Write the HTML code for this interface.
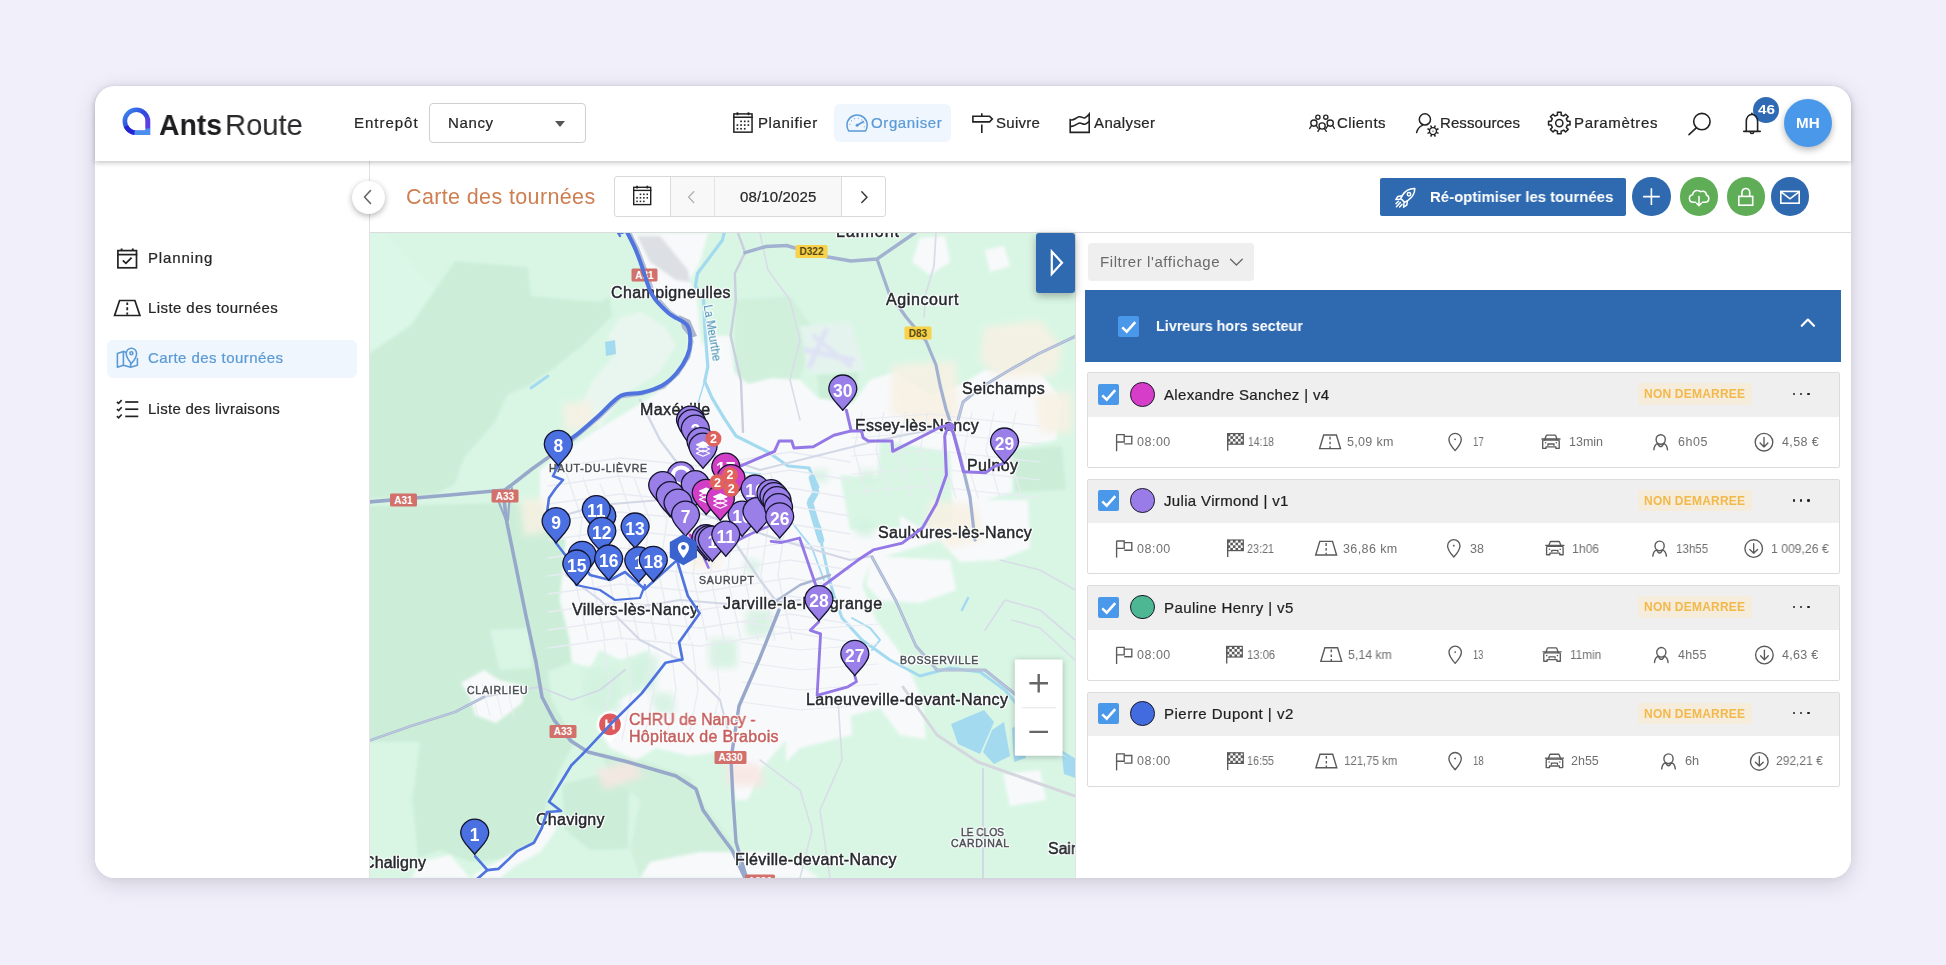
<!DOCTYPE html>
<html lang="fr">
<head>
<meta charset="utf-8">
<title>AntsRoute - Carte des tournées</title>
<style>
*{box-sizing:border-box;margin:0;padding:0}
html,body{width:1946px;height:965px;overflow:hidden}
body{background:#f1effa;font-family:"Liberation Sans",sans-serif;position:relative}
.abs{position:absolute}
.t{position:absolute;white-space:pre;font-family:"Liberation Sans",sans-serif;will-change:transform}
#card{position:absolute;left:95px;top:86px;width:1756px;height:792px;border-radius:20px;background:#fff;
  box-shadow:0 6px 22px rgba(60,60,80,.17),0 0 10px rgba(60,60,80,.08)}
#clip{position:absolute;left:95px;top:86px;width:1756px;height:792px;border-radius:20px;overflow:hidden}
#clip>.in{position:absolute;left:-95px;top:-86px;width:1946px;height:965px}
#hdr{position:absolute;left:95px;top:86px;width:1756px;height:75px;background:#fff;
  box-shadow:0 2px 5px rgba(0,0,0,.22);z-index:5}
svg{position:absolute;overflow:visible}
.ic{fill:none;stroke:#222;stroke-width:1.6;stroke-linecap:round;stroke-linejoin:round}
</style>
</head>
<body>
<div id="card"></div>
<div id="clip"><div class="in">

<!-- ================= MAP ================= -->
<svg style="left:370px;top:233px" width="705" height="645" viewBox="370 233 705 645">
<defs><clipPath id="mc"><rect x="370" y="233" width="705" height="645"/></clipPath><filter id="soft" x="-5%" y="-5%" width="110%" height="110%"><feGaussianBlur stdDeviation="1.4"/></filter><filter id="soft3" x="-5%" y="-5%" width="110%" height="110%"><feGaussianBlur stdDeviation="3.5"/></filter></defs>
<g clip-path="url(#mc)">
<rect x="370" y="233" width="705" height="645" fill="#d9f6e5"/>
<g filter="url(#soft)">
<path d="M368 354 L411 325 L435 290 L455 261 L528 267 L531 296 L600 302 L610 296 L612 316 L583 345 L554 368 L528 386 L507 395 L496 421 L464 458 L455 484 L435 495 L368 499 Z" fill="#cceed8" />
<path d="M368 233 L383 233 L435 290 L411 325 L368 354 Z" fill="#daf7e8" />
<path d="M368 506 L500 503 L560 506 L566 540 L560 600 L570 640 L572 662 L548 672 L552 700 L575 742 L560 770 L548 800 L536 842 L520 858 L470 862 L440 850 L418 858 L412 800 L420 742 L368 742 Z" fill="#cceed8" />
<path d="M490 630 L528 628 L532 668 L500 670 Z" fill="#d9f6e5" />
<path d="M562 784 L600 775 L629 790 L628 849 L590 850 L565 830 Z" fill="#cceed8" />
<path d="M600 752 L640 760 L690 776 L700 800 L732 842 L745 878 L640 878 L630 850 L640 800 L610 775 Z" fill="#d0f0dc" />
<path d="M735 300 L790 296 L815 330 L800 378 L762 398 L735 380 Z" fill="#d0f0dc" />
<path d="M817 375 L858 372 L858 402 L820 404 Z" fill="#cceed8" />
<path d="M1011 450 L1062 446 L1066 490 L1015 492 Z" fill="#cceed8" />
</g>
<g filter="url(#soft)">
<path d="M540 470 L562 452 L600 428 L640 404 L664 388 L684 362 L690 340 L680 318 L656 298 L642 262 L630 233 L708 233 L700 262 L690 280 L697 300 L700 330 L702 345 L712 336 L730 336 L734 372 L748 384 L772 378 L800 380 L818 398 L852 404 L870 380 L895 372 L930 395 L960 385 L985 370 L1040 372 L1062 400 L1056 440 L1012 448 L1012 492 L985 500 L1028 500 L1030 548 L1000 560 L960 562 L940 540 L900 552 L872 560 L862 585 L876 620 L898 650 L912 676 L922 700 L926 739 L900 735 L880 708 L850 716 L820 712 L792 706 L786 740 L760 770 L748 800 L736 800 L730 766 L716 752 L690 756 L656 748 L636 760 L610 748 L596 726 L618 700 L640 690 L650 650 L620 660 L600 650 L590 668 L572 662 L570 640 L560 600 L566 540 L548 530 L540 500 Z" fill="#f8f9fb" />
<path d="M786 700 L850 706 L852 735 L800 748 L786 762 Z" fill="#f8f9fb" />
<path d="M880 440 L950 452 L953 520 L920 528 L875 500 Z" fill="#d9f6e5" />
<path d="M840 475 L900 480 L900 528 L850 530 Z" fill="#d9f6e5" />
<path d="M600 428 L622 396 L660 372 L676 345 L664 326 L640 312 L620 318 L608 336 L616 354 L592 382 L578 412 Z" fill="#e9f6ef" />
<path d="M637 236 L660 236 L688 270 L690 282 L676 280 L650 262 Z" fill="#dcdfe3" />
<path d="M872 556 L950 560 L956 590 L920 603 L880 600 L866 585 Z" fill="#f8f9fb" />
<path d="M1003 774 L1040 770 L1046 800 L1010 806 Z" fill="#f8f9fb" />
<path d="M461 683 L484 670 L499 680 L525 686 L522 703 L496 723 L475 715 L470 697 Z" fill="#f8f9fb" />
<path d="M478 872 L517 851 L534 843 L548 812 L560 812 L556 830 L540 852 L515 866 L500 878 L470 878 Z" fill="#f8f9fb" />
<path d="M420 862 L450 855 L470 878 L412 878 Z" fill="#f8f9fb" />
<path d="M650 862 L700 852 L766 852 L800 866 L820 878 L640 878 Z" fill="#f8f9fb" />
<path d="M920 238 L945 236 L950 262 L930 275 L912 262 Z" fill="#f8f9fb" />
<path d="M985 250 L1004 246 L1010 266 L990 272 Z" fill="#f8f9fb" />
</g>
<g filter="url(#soft)">
<path d="M800 326 L850 322 L866 370 L808 374 Z" fill="#e4f3ee" />
<path d="M810 366 L826 330" fill="none" stroke="#dfe3f4" stroke-width="5.5" stroke-linejoin="round" stroke-linecap="round" />
<path d="M806 350 L852 360" fill="none" stroke="#dfe3f4" stroke-width="5.5" stroke-linejoin="round" stroke-linecap="round" />
<path d="M814 336 L850 366" fill="none" stroke="#dfe3f4" stroke-width="4.5" stroke-linejoin="round" stroke-linecap="round" />
</g>
<g filter="url(#soft3)" opacity="0.85">
<path d="M984 327 L1040 320 L1062 348 L1056 375 L1000 378 L980 360 Z" fill="#f8f1e3" />
<path d="M892 365 L955 361 L960 420 L920 428 L890 412 Z" fill="#f8f1e3" />
<path d="M1035 392 L1072 392 L1072 433 L1040 433 Z" fill="#f8f1e3" />
<path d="M562 404 L590 400 L596 426 L566 432 Z" fill="#f8f1e3" />
<path d="M520 500 L546 498 L548 532 L524 536 Z" fill="#f8f1e3" />
<path d="M930 500 L975 505 L985 540 L950 548 L925 525 Z" fill="#f8f1e3" />
<path d="M690 548 L720 548 L720 568 L690 568 Z" fill="#f8f1e3" />
<path d="M726 762 L760 764 L765 786 L728 786 Z" fill="#f8e6e2" />
<path d="M596 770 L632 760 L644 776 L604 790 Z" fill="#f8e6e2" />
<path d="M629 660 L656 660 L656 689 L629 689 Z" fill="#d3f2e0" />
<path d="M710 639 L737 639 L737 668 L710 668 Z" fill="#d3f2e0" />
<path d="M652 693 L673 693 L673 705 L652 705 Z" fill="#d3f2e0" />
<path d="M584 668 L620 668 L620 712 L584 712 Z" fill="#d3f2e0" />
<path d="M709 640 L733 640 L733 663 L709 663 Z" fill="#d3f2e0" />
<path d="M746 610 L772 610 L772 636 L746 636 Z" fill="#d3f2e0" />
<path d="M640 655 L658 655 L658 677 L640 677 Z" fill="#d3f2e0" />
<path d="M655 700 L675 700 L675 714 L655 714 Z" fill="#d3f2e0" />
<path d="M680 470 L694 470 L694 482 L680 482 Z" fill="#d3f2e0" />
<path d="M860 470 L876 470 L876 482 L860 482 Z" fill="#d3f2e0" />
<path d="M812 470 L828 470 L828 482 L812 482 Z" fill="#d3f2e0" />
<path d="M745 560 L759 560 L759 572 L745 572 Z" fill="#d3f2e0" />
<path d="M856 520 L874 520 L874 536 L856 536 Z" fill="#d3f2e0" />
</g>
<path d="M724.4 232 L722.3 240.3 L697.5 273.5 L695.4 285.9 L703.7 300.4 L704.7 325.3 L707.8 366.8 L704.7 381.3 L712 397.9 L724.4 418.6 L736 436 L768 452 L788 466 L809 468" fill="none" stroke="#a4daf0" stroke-width="3.2" stroke-linejoin="round" stroke-linecap="round" />
<path d="M809 468 L818 487 L809 500 L813 514 L820 528 L822 546 L829 578 L834 596 L842 618 L862 640 L890 660 L920 676 L950 668 L980 672 L1005 690 L1030 720 L1050 745 L1075 760" fill="none" stroke="#a4daf0" stroke-width="3" stroke-linejoin="round" stroke-linecap="round" />
<path d="M812 478 L816 492 L810 503 L815 520 L821 540" fill="none" stroke="#a4daf0" stroke-width="6.5" stroke-linejoin="round" stroke-linecap="round" />
<path d="M704.7 381 L696 410 L700 440 L725 470 L760 474" fill="none" stroke="#a4daf0" stroke-width="1.4" stroke-linejoin="round" stroke-linecap="round" />
<path d="M760 474 L790 520 L812 548 L824 580" fill="none" stroke="#a4daf0" stroke-width="1.8" stroke-linejoin="round" stroke-linecap="round" />
<path d="M951 724 L984 710 L994 722 L980 754 L958 744 Z" fill="#a4daf0" />
<path d="M992 730 L1004 722 L1010 756 L994 764 L983 752 Z" fill="#a4daf0" />
<path d="M1012 728 L1022 724 L1026 758 L1014 762 Z" fill="#a4daf0" />
<path d="M1062 756 L1075 758 L1075 778 L1064 774 Z" fill="#a4daf0" />
<path d="M852 618 L870 628 L880 640 L872 650" fill="none" stroke="#a4daf0" stroke-width="2" stroke-linejoin="round" stroke-linecap="round" />
<path d="M605 342 L615 340 L616 354 L606 356 Z" fill="#a4daf0" />
<path d="M531 388 L548 376" fill="none" stroke="#a4daf0" stroke-width="3" stroke-linejoin="round" stroke-linecap="round" />
<path d="M962 610 L968 598" fill="none" stroke="#a4daf0" stroke-width="2.5" stroke-linejoin="round" stroke-linecap="round" />
<path d="M566 472 L582 520 L574 575 L588 640" fill="none" stroke="#e8ebf1" stroke-width="1.3" stroke-linejoin="round" stroke-linecap="round" />
<path d="M583 478 L599 520 L591 575 L605 640" fill="none" stroke="#e8ebf1" stroke-width="1.3" stroke-linejoin="round" stroke-linecap="round" />
<path d="M600 484 L616 520 L608 575 L622 640" fill="none" stroke="#e8ebf1" stroke-width="1.3" stroke-linejoin="round" stroke-linecap="round" />
<path d="M617 472 L633 520 L625 575 L639 640" fill="none" stroke="#e8ebf1" stroke-width="1.3" stroke-linejoin="round" stroke-linecap="round" />
<path d="M634 478 L650 520 L642 575 L656 640" fill="none" stroke="#e8ebf1" stroke-width="1.3" stroke-linejoin="round" stroke-linecap="round" />
<path d="M651 484 L667 520 L659 575 L673 640" fill="none" stroke="#e8ebf1" stroke-width="1.3" stroke-linejoin="round" stroke-linecap="round" />
<path d="M668 472 L684 520 L676 575 L690 640" fill="none" stroke="#e8ebf1" stroke-width="1.3" stroke-linejoin="round" stroke-linecap="round" />
<path d="M685 478 L701 520 L693 575 L707 640" fill="none" stroke="#e8ebf1" stroke-width="1.3" stroke-linejoin="round" stroke-linecap="round" />
<path d="M702 484 L718 520 L710 575 L724 640" fill="none" stroke="#e8ebf1" stroke-width="1.3" stroke-linejoin="round" stroke-linecap="round" />
<path d="M719 472 L735 520 L727 575 L741 640" fill="none" stroke="#e8ebf1" stroke-width="1.3" stroke-linejoin="round" stroke-linecap="round" />
<path d="M736 478 L752 520 L744 575 L758 640" fill="none" stroke="#e8ebf1" stroke-width="1.3" stroke-linejoin="round" stroke-linecap="round" />
<path d="M753 484 L769 520 L761 575 L775 640" fill="none" stroke="#e8ebf1" stroke-width="1.3" stroke-linejoin="round" stroke-linecap="round" />
<path d="M770 472 L786 520 L778 575 L792 640" fill="none" stroke="#e8ebf1" stroke-width="1.3" stroke-linejoin="round" stroke-linecap="round" />
<path d="M548 468 L620 458 L700 466 L790 452 L850 462" fill="none" stroke="#e8ebf1" stroke-width="1.3" stroke-linejoin="round" stroke-linecap="round" />
<path d="M548 486 L620 476 L700 484 L790 470 L850 480" fill="none" stroke="#e8ebf1" stroke-width="1.3" stroke-linejoin="round" stroke-linecap="round" />
<path d="M548 504 L620 494 L700 502 L790 488 L850 498" fill="none" stroke="#e8ebf1" stroke-width="1.3" stroke-linejoin="round" stroke-linecap="round" />
<path d="M548 522 L620 512 L700 520 L790 506 L850 516" fill="none" stroke="#e8ebf1" stroke-width="1.3" stroke-linejoin="round" stroke-linecap="round" />
<path d="M548 540 L620 530 L700 538 L790 524 L850 534" fill="none" stroke="#e8ebf1" stroke-width="1.3" stroke-linejoin="round" stroke-linecap="round" />
<path d="M548 558 L620 548 L700 556 L790 542 L850 552" fill="none" stroke="#e8ebf1" stroke-width="1.3" stroke-linejoin="round" stroke-linecap="round" />
<path d="M548 576 L620 566 L700 574 L790 560 L850 570" fill="none" stroke="#e8ebf1" stroke-width="1.3" stroke-linejoin="round" stroke-linecap="round" />
<path d="M548 594 L620 584 L700 592 L790 578 L850 588" fill="none" stroke="#e8ebf1" stroke-width="1.3" stroke-linejoin="round" stroke-linecap="round" />
<path d="M548 612 L620 602 L700 610 L790 596 L850 606" fill="none" stroke="#e8ebf1" stroke-width="1.3" stroke-linejoin="round" stroke-linecap="round" />
<path d="M548 630 L620 620 L700 628 L790 614 L850 624" fill="none" stroke="#e8ebf1" stroke-width="1.3" stroke-linejoin="round" stroke-linecap="round" />
<path d="M548 648 L620 638 L700 646 L790 632 L850 642" fill="none" stroke="#e8ebf1" stroke-width="1.3" stroke-linejoin="round" stroke-linecap="round" />
<path d="M862 412 L854 450 L868 498" fill="none" stroke="#e8ebf1" stroke-width="1.2" stroke-linejoin="round" stroke-linecap="round" />
<path d="M884 412 L876 450 L890 498" fill="none" stroke="#e8ebf1" stroke-width="1.2" stroke-linejoin="round" stroke-linecap="round" />
<path d="M906 412 L898 450 L912 498" fill="none" stroke="#e8ebf1" stroke-width="1.2" stroke-linejoin="round" stroke-linecap="round" />
<path d="M928 412 L920 450 L934 498" fill="none" stroke="#e8ebf1" stroke-width="1.2" stroke-linejoin="round" stroke-linecap="round" />
<path d="M950 412 L942 450 L956 498" fill="none" stroke="#e8ebf1" stroke-width="1.2" stroke-linejoin="round" stroke-linecap="round" />
<path d="M972 412 L964 450 L978 498" fill="none" stroke="#e8ebf1" stroke-width="1.2" stroke-linejoin="round" stroke-linecap="round" />
<path d="M994 412 L986 450 L1000 498" fill="none" stroke="#e8ebf1" stroke-width="1.2" stroke-linejoin="round" stroke-linecap="round" />
<path d="M1016 412 L1008 450 L1022 498" fill="none" stroke="#e8ebf1" stroke-width="1.2" stroke-linejoin="round" stroke-linecap="round" />
<path d="M852 420 L930 414 L1040 426" fill="none" stroke="#e8ebf1" stroke-width="1.2" stroke-linejoin="round" stroke-linecap="round" />
<path d="M852 438 L930 432 L1040 444" fill="none" stroke="#e8ebf1" stroke-width="1.2" stroke-linejoin="round" stroke-linecap="round" />
<path d="M852 456 L930 450 L1040 462" fill="none" stroke="#e8ebf1" stroke-width="1.2" stroke-linejoin="round" stroke-linecap="round" />
<path d="M852 474 L930 468 L1040 480" fill="none" stroke="#e8ebf1" stroke-width="1.2" stroke-linejoin="round" stroke-linecap="round" />
<path d="M852 492 L930 486 L1040 498" fill="none" stroke="#e8ebf1" stroke-width="1.2" stroke-linejoin="round" stroke-linecap="round" />
<path d="M742 602 L800 610 L878 604" fill="none" stroke="#e8ebf1" stroke-width="1.2" stroke-linejoin="round" stroke-linecap="round" />
<path d="M742 622 L800 630 L878 624" fill="none" stroke="#e8ebf1" stroke-width="1.2" stroke-linejoin="round" stroke-linecap="round" />
<path d="M742 642 L800 650 L878 644" fill="none" stroke="#e8ebf1" stroke-width="1.2" stroke-linejoin="round" stroke-linecap="round" />
<path d="M742 662 L800 670 L878 664" fill="none" stroke="#e8ebf1" stroke-width="1.2" stroke-linejoin="round" stroke-linecap="round" />
<path d="M742 682 L800 690 L878 684" fill="none" stroke="#e8ebf1" stroke-width="1.2" stroke-linejoin="round" stroke-linecap="round" />
<path d="M742 702 L800 710 L878 704" fill="none" stroke="#e8ebf1" stroke-width="1.2" stroke-linejoin="round" stroke-linecap="round" />
<path d="M604 642 L610 690 L600 740" fill="none" stroke="#e8ebf1" stroke-width="1.2" stroke-linejoin="round" stroke-linecap="round" />
<path d="M626 642 L632 690 L622 740" fill="none" stroke="#e8ebf1" stroke-width="1.2" stroke-linejoin="round" stroke-linecap="round" />
<path d="M648 642 L654 690 L644 740" fill="none" stroke="#e8ebf1" stroke-width="1.2" stroke-linejoin="round" stroke-linecap="round" />
<path d="M670 642 L676 690 L666 740" fill="none" stroke="#e8ebf1" stroke-width="1.2" stroke-linejoin="round" stroke-linecap="round" />
<path d="M692 642 L698 690 L688 740" fill="none" stroke="#e8ebf1" stroke-width="1.2" stroke-linejoin="round" stroke-linecap="round" />
<path d="M714 642 L720 690 L710 740" fill="none" stroke="#e8ebf1" stroke-width="1.2" stroke-linejoin="round" stroke-linecap="round" />
<path d="M470 684 L478 716" fill="none" stroke="#e9ecf2" stroke-width="1" stroke-linejoin="round" stroke-linecap="round" />
<path d="M482 684 L490 716" fill="none" stroke="#e9ecf2" stroke-width="1" stroke-linejoin="round" stroke-linecap="round" />
<path d="M494 684 L502 716" fill="none" stroke="#e9ecf2" stroke-width="1" stroke-linejoin="round" stroke-linecap="round" />
<path d="M506 684 L514 716" fill="none" stroke="#e9ecf2" stroke-width="1" stroke-linejoin="round" stroke-linecap="round" />
<path d="M548 520 L600 505 L660 500 L720 520 L780 540 L850 560 L872 556" fill="none" stroke="#d2d8e6" stroke-width="2.2" stroke-linejoin="round" stroke-linecap="round" />
<path d="M640 400 L660 440 L690 480 L720 520 L760 580 L776 601" fill="none" stroke="#d2d8e6" stroke-width="2.4" stroke-linejoin="round" stroke-linecap="round" />
<path d="M700 450 L760 470 L820 455 L880 440 L950 426" fill="none" stroke="#d2d8e6" stroke-width="2" stroke-linejoin="round" stroke-linecap="round" />
<path d="M620 610 L680 600 L740 605 L800 600" fill="none" stroke="#d2d8e6" stroke-width="2" stroke-linejoin="round" stroke-linecap="round" />
<path d="M566 575 L600 600 L640 640 L680 660 L720 700 L731 742" fill="none" stroke="#d2d8e6" stroke-width="2" stroke-linejoin="round" stroke-linecap="round" />
<path d="M738 233 L742 244 L745 252.7 L734.8 273.5 L735.8 300.4 L730.6 335.7 L741 381.3 L743 432" fill="none" stroke="#c9cfdc" stroke-width="2.4" stroke-linejoin="round" stroke-linecap="round" />
<path d="M484 697 L520 690 L540 687 L572 700 L600 690 L625 670" fill="none" stroke="#d2d8e6" stroke-width="1.8" stroke-linejoin="round" stroke-linecap="round" />
<path d="M903 687 L937 735 L978 762 L1026 779 L1075 796" fill="none" stroke="#d4d7de" stroke-width="3" stroke-linejoin="round" stroke-linecap="round" />
<path d="M983 769 L983 878" fill="none" stroke="#d2d8e6" stroke-width="2" stroke-linejoin="round" stroke-linecap="round" />
<path d="M760 760 L800 790 L812 830 L800 878" fill="none" stroke="#d9dde8" stroke-width="1.6" stroke-linejoin="round" stroke-linecap="round" />
<path d="M838 700 L842 760 L820 810 L830 878" fill="none" stroke="#d9dde8" stroke-width="1.6" stroke-linejoin="round" stroke-linecap="round" />
<path d="M985 630 L1005 600 L1040 610 L1075 640" fill="none" stroke="#d9dde8" stroke-width="1.8" stroke-linejoin="round" stroke-linecap="round" />
<path d="M1000 560 L1040 570 L1075 590" fill="none" stroke="#d9dde8" stroke-width="1.6" stroke-linejoin="round" stroke-linecap="round" />
<path d="M760 233 L768 270 L790 300 L800 340 L790 380 L800 420" fill="none" stroke="#d9dde8" stroke-width="1.6" stroke-linejoin="round" stroke-linecap="round" />
<path d="M936 232 L934 266 L926 293 L924 317" fill="none" stroke="#d9dde8" stroke-width="1.8" stroke-linejoin="round" stroke-linecap="round" />
<path d="M1012 620 L1040 628 L1075 660" fill="none" stroke="#d9dde8" stroke-width="1.6" stroke-linejoin="round" stroke-linecap="round" />
<path d="M745 252.7 L766 246.5 L786.6 245.5 L807 251.7 L828 257 L851 261 L877 259 L906 239 L916 232" fill="none" stroke="#a2b1cf" stroke-width="3.4" stroke-linejoin="round" stroke-linecap="round" />
<path d="M877 259 L889 293 L906 317 L926 341 L936 365 L940 385 L946 409 L951.5 426 L960 456 L970 497 L975 540" fill="none" stroke="#a2b1cf" stroke-width="3.2" stroke-linejoin="round" stroke-linecap="round" />
<path d="M1076 336 L1038 354 L1008 371 L980 388 L963 402 L958 420" fill="none" stroke="#a9b7d3" stroke-width="3" stroke-linejoin="round" stroke-linecap="round" />
<path d="M1076 336 L1038 354 L1008 371 L980 388 L963 402 L958 420" fill="none" stroke="#c9d2e6" stroke-width="0.8400000000000001" stroke-linejoin="round" stroke-linecap="round" />
<path d="M368 741 L411 726 L455 712 L484 697" fill="none" stroke="#a9b7d3" stroke-width="2.6" stroke-linejoin="round" stroke-linecap="round" />
<path d="M368 741 L411 726 L455 712 L484 697" fill="none" stroke="#c9d2e6" stroke-width="0.8" stroke-linejoin="round" stroke-linecap="round" />
<path d="M368 502 L450 495 L505 490 L532 469 L560 449" fill="none" stroke="#98a8ca" stroke-width="3.6" stroke-linejoin="round" stroke-linecap="round" />
<path d="M503 492 L507 523 L516 567 L526 616 L536 662 L542 697 L554 720 L571 741 L588 752 L628 762 L676 776 L696 789 L703 810 L720 834 L732 850 L745 878" fill="none" stroke="#98a8ca" stroke-width="3.6" stroke-linejoin="round" stroke-linecap="round" />
<path d="M494 490 L500 505 L506 520" fill="none" stroke="#98a8ca" stroke-width="2.2" stroke-linejoin="round" stroke-linecap="round" />
<path d="M512 488 L509 505 L508 520" fill="none" stroke="#98a8ca" stroke-width="2.2" stroke-linejoin="round" stroke-linecap="round" />
<path d="M872 557 L896 601 L916 646 L937 670 L985 670 L1015 694 L1040 720" fill="none" stroke="#a9b7d3" stroke-width="3" stroke-linejoin="round" stroke-linecap="round" />
<path d="M872 557 L896 601 L916 646 L937 670 L985 670 L1015 694 L1040 720" fill="none" stroke="#c9d2e6" stroke-width="0.8400000000000001" stroke-linejoin="round" stroke-linecap="round" />
<path d="M779 610 L759 660 L739 706 L731 759 L733 799 L736 842 L746 876" fill="none" stroke="#98a8ca" stroke-width="3.4" stroke-linejoin="round" stroke-linecap="round" />
<path d="M776 601 L800 585 L830 575" fill="none" stroke="#a9b7d3" stroke-width="2.4" stroke-linejoin="round" stroke-linecap="round" />
<path d="M630 233 L638 249 L644 265 L654 294 L670 312 L689 325 L692 342 L689 357 L678 374 L664 387 L642 394 L621 397 L601 416 L562 449" fill="none" stroke="#b4bfd6" stroke-width="3" stroke-linejoin="round" stroke-linecap="round" />
<path d="M679 315 L690 320 L697 336 L690 338 L682 328 Z" fill="#aab4cc" />
<path d="M610 743 C606.5 736 596.8 732.5 596.8 724.4 A13.2 13.2 0 0 1 623.2 724.4 C623.2 732.5 613.5 736 610 743 Z" fill="#fff"/>
<circle cx="610" cy="724.4" r="10.8" fill="#dc595c"/><path d="M606.4 719.4 V729.4 M613.6 719.4 V729.4 M606.4 724.4 H613.6" stroke="#fff" stroke-width="2.2" fill="none"/>
<rect x="631.5" y="268.5" width="26" height="13" rx="1.5" fill="#d2716b"/>
<text x="644.5" y="278.6" font-family="Liberation Sans, sans-serif" font-size="10" font-weight="700" fill="#fff" text-anchor="middle">A31</text>
<rect x="390.0" y="493.5" width="27" height="13" rx="1.5" fill="#d2716b"/>
<text x="403.5" y="503.6" font-family="Liberation Sans, sans-serif" font-size="10" font-weight="700" fill="#fff" text-anchor="middle">A31</text>
<rect x="491.5" y="489.5" width="27" height="13" rx="1.5" fill="#d2716b"/>
<text x="505" y="499.6" font-family="Liberation Sans, sans-serif" font-size="10" font-weight="700" fill="#fff" text-anchor="middle">A33</text>
<rect x="549.5" y="725.0" width="27" height="13" rx="1.5" fill="#d2716b"/>
<text x="563" y="735.1" font-family="Liberation Sans, sans-serif" font-size="10" font-weight="700" fill="#fff" text-anchor="middle">A33</text>
<rect x="714.5" y="751.0" width="32" height="13" rx="1.5" fill="#d2716b"/>
<text x="730.5" y="761.1" font-family="Liberation Sans, sans-serif" font-size="10" font-weight="700" fill="#fff" text-anchor="middle">A330</text>
<rect x="745.0" y="874.5" width="30" height="13" rx="1.5" fill="#d2716b"/>
<text x="760" y="884.6" font-family="Liberation Sans, sans-serif" font-size="10" font-weight="700" fill="#fff" text-anchor="middle">A330</text>
<rect x="795.5" y="245.0" width="32" height="13" rx="1.5" fill="#f7d24a"/>
<text x="811.5" y="255.1" font-family="Liberation Sans, sans-serif" font-size="10" font-weight="700" fill="#5a4a10" text-anchor="middle">D322</text>
<rect x="904.5" y="326.5" width="27" height="13" rx="1.5" fill="#f7d24a"/>
<text x="918" y="336.6" font-family="Liberation Sans, sans-serif" font-size="10" font-weight="700" fill="#5a4a10" text-anchor="middle">D83</text>
</g></svg>
<div class="abs" style="left:370px;top:233px;width:705px;height:645px;overflow:hidden"><div class="abs" style="left:-370px;top:-233px">
<span class="t" style="left:836.0px;top:223.5px;font-size:16px;line-height:16px;font-weight:400;color:#25282c;letter-spacing:1.01px;text-shadow:0 0 1.5px #fff,0 0 1.5px #fff,0 0 2px #fff,1px 0 1px #fff,-1px 0 1px #fff,0 1px 1px #fff,0 -1px 1px #fff,1px 1px 1px #fff,-1px -1px 1px #fff,1px -1px 1px #fff,-1px 1px 1px #fff;-webkit-text-stroke:0.45px currentColor;">Laimont</span>
<span class="t" style="left:611.4px;top:284.7px;font-size:16px;line-height:16px;font-weight:400;color:#25282c;letter-spacing:0.37px;text-shadow:0 0 1.5px #fff,0 0 1.5px #fff,0 0 2px #fff,1px 0 1px #fff,-1px 0 1px #fff,0 1px 1px #fff,0 -1px 1px #fff,1px 1px 1px #fff,-1px -1px 1px #fff,1px -1px 1px #fff,-1px 1px 1px #fff;-webkit-text-stroke:0.45px currentColor;">Champigneulles</span>
<span class="t" style="left:885.5px;top:292.2px;font-size:16px;line-height:16px;font-weight:400;color:#25282c;letter-spacing:0.61px;text-shadow:0 0 1.5px #fff,0 0 1.5px #fff,0 0 2px #fff,1px 0 1px #fff,-1px 0 1px #fff,0 1px 1px #fff,0 -1px 1px #fff,1px 1px 1px #fff,-1px -1px 1px #fff,1px -1px 1px #fff,-1px 1px 1px #fff;-webkit-text-stroke:0.45px currentColor;">Agincourt</span>
<span class="t" style="left:962.4px;top:381.0px;font-size:16px;line-height:16px;font-weight:400;color:#25282c;letter-spacing:0.46px;text-shadow:0 0 1.5px #fff,0 0 1.5px #fff,0 0 2px #fff,1px 0 1px #fff,-1px 0 1px #fff,0 1px 1px #fff,0 -1px 1px #fff,1px 1px 1px #fff,-1px -1px 1px #fff,1px -1px 1px #fff,-1px 1px 1px #fff;-webkit-text-stroke:0.45px currentColor;">Seichamps</span>
<span class="t" style="left:639.8px;top:401.6px;font-size:16px;line-height:16px;font-weight:400;color:#25282c;letter-spacing:0.44px;text-shadow:0 0 1.5px #fff,0 0 1.5px #fff,0 0 2px #fff,1px 0 1px #fff,-1px 0 1px #fff,0 1px 1px #fff,0 -1px 1px #fff,1px 1px 1px #fff,-1px -1px 1px #fff,1px -1px 1px #fff,-1px 1px 1px #fff;-webkit-text-stroke:0.45px currentColor;">Maxéville</span>
<span class="t" style="left:854.8px;top:418.0px;font-size:16px;line-height:16px;font-weight:400;color:#25282c;letter-spacing:0.26px;text-shadow:0 0 1.5px #fff,0 0 1.5px #fff,0 0 2px #fff,1px 0 1px #fff,-1px 0 1px #fff,0 1px 1px #fff,0 -1px 1px #fff,1px 1px 1px #fff,-1px -1px 1px #fff,1px -1px 1px #fff,-1px 1px 1px #fff;-webkit-text-stroke:0.45px currentColor;">Essey-lès-Nancy</span>
<span class="t" style="left:967.0px;top:458.0px;font-size:16px;line-height:16px;font-weight:400;color:#25282c;letter-spacing:0.42px;text-shadow:0 0 1.5px #fff,0 0 1.5px #fff,0 0 2px #fff,1px 0 1px #fff,-1px 0 1px #fff,0 1px 1px #fff,0 -1px 1px #fff,1px 1px 1px #fff,-1px -1px 1px #fff,1px -1px 1px #fff,-1px 1px 1px #fff;-webkit-text-stroke:0.45px currentColor;">Pulnoy</span>
<span class="t" style="left:878.0px;top:524.7px;font-size:16px;line-height:16px;font-weight:400;color:#25282c;letter-spacing:0.34px;text-shadow:0 0 1.5px #fff,0 0 1.5px #fff,0 0 2px #fff,1px 0 1px #fff,-1px 0 1px #fff,0 1px 1px #fff,0 -1px 1px #fff,1px 1px 1px #fff,-1px -1px 1px #fff,1px -1px 1px #fff,-1px 1px 1px #fff;-webkit-text-stroke:0.45px currentColor;">Saulxures-lès-Nancy</span>
<span class="t" style="left:572.0px;top:602.0px;font-size:16px;line-height:16px;font-weight:400;color:#25282c;letter-spacing:0.39px;text-shadow:0 0 1.5px #fff,0 0 1.5px #fff,0 0 2px #fff,1px 0 1px #fff,-1px 0 1px #fff,0 1px 1px #fff,0 -1px 1px #fff,1px 1px 1px #fff,-1px -1px 1px #fff,1px -1px 1px #fff,-1px 1px 1px #fff;-webkit-text-stroke:0.45px currentColor;">Villers-lès-Nancy</span>
<span class="t" style="left:723.0px;top:596.0px;font-size:16px;line-height:16px;font-weight:400;color:#25282c;letter-spacing:0.53px;text-shadow:0 0 1.5px #fff,0 0 1.5px #fff,0 0 2px #fff,1px 0 1px #fff,-1px 0 1px #fff,0 1px 1px #fff,0 -1px 1px #fff,1px 1px 1px #fff,-1px -1px 1px #fff,1px -1px 1px #fff,-1px 1px 1px #fff;-webkit-text-stroke:0.45px currentColor;">Jarville-la-Malgrange</span>
<span class="t" style="left:806.2px;top:691.5px;font-size:16px;line-height:16px;font-weight:400;color:#25282c;letter-spacing:0.37px;text-shadow:0 0 1.5px #fff,0 0 1.5px #fff,0 0 2px #fff,1px 0 1px #fff,-1px 0 1px #fff,0 1px 1px #fff,0 -1px 1px #fff,1px 1px 1px #fff,-1px -1px 1px #fff,1px -1px 1px #fff,-1px 1px 1px #fff;-webkit-text-stroke:0.45px currentColor;">Laneuveville-devant-Nancy</span>
<span class="t" style="left:535.5px;top:812.2px;font-size:16px;line-height:16px;font-weight:400;color:#25282c;letter-spacing:0.26px;text-shadow:0 0 1.5px #fff,0 0 1.5px #fff,0 0 2px #fff,1px 0 1px #fff,-1px 0 1px #fff,0 1px 1px #fff,0 -1px 1px #fff,1px 1px 1px #fff,-1px -1px 1px #fff,1px -1px 1px #fff,-1px 1px 1px #fff;-webkit-text-stroke:0.45px currentColor;">Chavigny</span>
<span class="t" style="left:735.0px;top:851.5px;font-size:16px;line-height:16px;font-weight:400;color:#25282c;letter-spacing:0.38px;text-shadow:0 0 1.5px #fff,0 0 1.5px #fff,0 0 2px #fff,1px 0 1px #fff,-1px 0 1px #fff,0 1px 1px #fff,0 -1px 1px #fff,1px 1px 1px #fff,-1px -1px 1px #fff,1px -1px 1px #fff,-1px 1px 1px #fff;-webkit-text-stroke:0.45px currentColor;">Fléville-devant-Nancy</span>
<span class="t" style="left:363.0px;top:855.0px;font-size:16px;line-height:16px;font-weight:400;color:#25282c;letter-spacing:0.10px;text-shadow:0 0 1.5px #fff,0 0 1.5px #fff,0 0 2px #fff,1px 0 1px #fff,-1px 0 1px #fff,0 1px 1px #fff,0 -1px 1px #fff,1px 1px 1px #fff,-1px -1px 1px #fff,1px -1px 1px #fff,-1px 1px 1px #fff;-webkit-text-stroke:0.45px currentColor;">Chaligny</span>
<span class="t" style="left:1048.0px;top:841.3px;font-size:16px;line-height:16px;font-weight:400;color:#25282c;letter-spacing:0.00px;transform:scaleX(0.9871);transform-origin:0 0;text-shadow:0 0 1.5px #fff,0 0 1.5px #fff,0 0 2px #fff,1px 0 1px #fff,-1px 0 1px #fff,0 1px 1px #fff,0 -1px 1px #fff,1px 1px 1px #fff,-1px -1px 1px #fff,1px -1px 1px #fff,-1px 1px 1px #fff;-webkit-text-stroke:0.45px currentColor;">Saint</span>
<span class="t" style="left:548.5px;top:462.6px;font-size:10.5px;line-height:10.5px;font-weight:400;color:#4a4f55;letter-spacing:0.81px;text-shadow:0 0 1.5px #fff,0 0 1.5px #fff,0 0 2px #fff,1px 0 1px #fff,-1px 0 1px #fff,0 1px 1px #fff,0 -1px 1px #fff,1px 1px 1px #fff,-1px -1px 1px #fff,1px -1px 1px #fff,-1px 1px 1px #fff;-webkit-text-stroke:0.45px currentColor;">HAUT-DU-LIÈVRE</span>
<span class="t" style="left:699.0px;top:574.6px;font-size:10.5px;line-height:10.5px;font-weight:400;color:#4a4f55;letter-spacing:0.80px;text-shadow:0 0 1.5px #fff,0 0 1.5px #fff,0 0 2px #fff,1px 0 1px #fff,-1px 0 1px #fff,0 1px 1px #fff,0 -1px 1px #fff,1px 1px 1px #fff,-1px -1px 1px #fff,1px -1px 1px #fff,-1px 1px 1px #fff;-webkit-text-stroke:0.45px currentColor;">SAURUPT</span>
<span class="t" style="left:466.5px;top:685.2px;font-size:10.5px;line-height:10.5px;font-weight:400;color:#4a4f55;letter-spacing:0.78px;text-shadow:0 0 1.5px #fff,0 0 1.5px #fff,0 0 2px #fff,1px 0 1px #fff,-1px 0 1px #fff,0 1px 1px #fff,0 -1px 1px #fff,1px 1px 1px #fff,-1px -1px 1px #fff,1px -1px 1px #fff,-1px 1px 1px #fff;-webkit-text-stroke:0.45px currentColor;">CLAIRLIEU</span>
<span class="t" style="left:900.2px;top:655.1px;font-size:10.5px;line-height:10.5px;font-weight:400;color:#4a4f55;letter-spacing:0.61px;text-shadow:0 0 1.5px #fff,0 0 1.5px #fff,0 0 2px #fff,1px 0 1px #fff,-1px 0 1px #fff,0 1px 1px #fff,0 -1px 1px #fff,1px 1px 1px #fff,-1px -1px 1px #fff,1px -1px 1px #fff,-1px 1px 1px #fff;-webkit-text-stroke:0.45px currentColor;">BOSSERVILLE</span>
<span class="t" style="left:961.0px;top:827.1px;font-size:10.5px;line-height:10.5px;font-weight:400;color:#4a4f55;letter-spacing:0.00px;transform:scaleX(0.9694);transform-origin:0 0;text-shadow:0 0 1.5px #fff,0 0 1.5px #fff,0 0 2px #fff,1px 0 1px #fff,-1px 0 1px #fff,0 1px 1px #fff,0 -1px 1px #fff,1px 1px 1px #fff,-1px -1px 1px #fff,1px -1px 1px #fff,-1px 1px 1px #fff;-webkit-text-stroke:0.45px currentColor;">LE CLOS</span>
<span class="t" style="left:951.0px;top:838.4px;font-size:10.5px;line-height:10.5px;font-weight:400;color:#4a4f55;letter-spacing:0.70px;text-shadow:0 0 1.5px #fff,0 0 1.5px #fff,0 0 2px #fff,1px 0 1px #fff,-1px 0 1px #fff,0 1px 1px #fff,0 -1px 1px #fff,1px 1px 1px #fff,-1px -1px 1px #fff,1px -1px 1px #fff,-1px 1px 1px #fff;-webkit-text-stroke:0.45px currentColor;">CARDINAL</span>
<span class="t" style="left:628.5px;top:711.6px;font-size:16px;line-height:16px;font-weight:400;color:#c5605f;letter-spacing:0.00px;transform:scaleX(0.9880);transform-origin:0 0;text-shadow:0 0 1.5px #fff,0 0 1.5px #fff,0 0 2px #fff,1px 0 1px #fff,-1px 0 1px #fff,0 1px 1px #fff,0 -1px 1px #fff,1px 1px 1px #fff,-1px -1px 1px #fff,1px -1px 1px #fff,-1px 1px 1px #fff;-webkit-text-stroke:0.45px currentColor;">CHRU de Nancy -</span>
<span class="t" style="left:628.5px;top:728.6px;font-size:16px;line-height:16px;font-weight:400;color:#c5605f;letter-spacing:0.30px;text-shadow:0 0 1.5px #fff,0 0 1.5px #fff,0 0 2px #fff,1px 0 1px #fff,-1px 0 1px #fff,0 1px 1px #fff,0 -1px 1px #fff,1px 1px 1px #fff,-1px -1px 1px #fff,1px -1px 1px #fff,-1px 1px 1px #fff;-webkit-text-stroke:0.45px currentColor;">Hôpitaux de Brabois</span>
<span class="t" style="left:703.2px;top:295.2px;font-size:12.5px;line-height:12.5px;font-weight:400;color:#4f97b6;letter-spacing:0.00px;transform:rotate(80.5deg) scaleX(0.9014);transform-origin:0 84.65%;text-shadow:0 0 1.5px #fff,0 0 1.5px #fff,0 0 2px #fff,1px 0 1px #fff,-1px 0 1px #fff,0 1px 1px #fff,0 -1px 1px #fff,1px 1px 1px #fff,-1px -1px 1px #fff,1px -1px 1px #fff,-1px 1px 1px #fff;-webkit-text-stroke:0.15px currentColor;">La Meurthe</span>
</div></div>
<svg style="left:370px;top:233px" width="705" height="645" viewBox="370 233 705 645">
<defs><clipPath id="mc2"><rect x="370" y="233" width="705" height="645"/></clipPath></defs><g clip-path="url(#mc2)">
<path d="M620 236 L617 231 L622 233 L626 231" fill="none" stroke="#4f74de" stroke-width="2.4" stroke-linejoin="round" stroke-linecap="round" />
<path d="M625 228 C625.3 228.7 625.3 228.6 627 232 C628.7 235.4 632.8 243.1 635.2 248.6 C637.6 254.1 638.7 257.6 641.5 265.2 C644.3 272.8 647.3 286.2 651.8 294.2 C656.3 302.1 662.5 307.7 668.4 312.9 C674.3 318.1 683.5 320.5 687.1 325.3 C690.7 330.1 690.2 336.7 690.2 341.9 C690.2 347.1 689.4 351.2 687.1 356.4 C684.9 361.6 680.9 368.2 676.7 373 C672.6 377.8 668.1 382.1 662.2 385.4 C656.3 388.7 648.4 391.0 641.5 392.7 C634.6 394.4 627.6 392.2 620.7 395.8 C613.8 399.4 606.8 408.5 600 414.5 C593.2 420.5 586.3 426.6 580 432 C573.7 437.4 565.7 441.3 562 447 C558.3 452.7 558.7 462.8 558 466" fill="none" stroke="#4f74de" stroke-width="4" stroke-linejoin="round" stroke-linecap="round"/>
<path d="M558 466 L553 476 L563 480 L556 488 L549 498 L546 520 L556 543 L566 556 L580 560 L590 575 L610 580 L625 572 L640 585 L644.6 589.3 L667.4 568.8 L677.6 559.6" fill="none" stroke="#4f74de" stroke-width="2.6" stroke-linejoin="round" stroke-linecap="round" />
<path d="M566 556 L576 585 L600 590 L615 600 L640 598 L645 585" fill="none" stroke="#4f74de" stroke-width="2.2" stroke-linejoin="round" stroke-linecap="round" />
<path d="M677.6 562 L687.9 596.1 L699.6 613.2 L679.1 642.3 L682.5 659.4 L665.4 662.8 L641.5 693.6 L610.5 724.3 L582.6 754.1" fill="none" stroke="#4f74de" stroke-width="2.7" stroke-linejoin="round" stroke-linecap="round" />
<path d="M582.6 754.1 L571.4 765.3 L549 801.7 L561.1 811 L547.1 812 L541.5 828.7 L534 842.7 L517.3 851.1 L498.6 868.8 L487.4 870.1 L475.3 856.3" fill="none" stroke="#4f74de" stroke-width="2.7" stroke-linejoin="round" stroke-linecap="round" />
<path d="M487.4 870.1 L476 880" fill="none" stroke="#4f74de" stroke-width="2.7" stroke-linejoin="round" stroke-linecap="round" />
<path d="M725 476 L740.3 466.1 L774.5 451.3 L779.1 441 L791.7 441 L793.9 447.9 L813.3 446.8 L833.8 435.3 L851.2 430.9 L846.4 410.3" fill="none" stroke="#9478e6" stroke-width="3" stroke-linejoin="round" stroke-linecap="round" />
<path d="M851.2 430.9 L861.4 430.9 L863.1 437.7 L868.2 441.1 L892 441.1 L892.7 451.3 L939.6 427.5 L948.1 425.1 L953.2 432.6 L963.4 471.7 L985.5 472.7 L994 466.6 L1004.2 463.2" fill="none" stroke="#9478e6" stroke-width="3" stroke-linejoin="round" stroke-linecap="round" />
<path d="M948.1 425.8 L944.7 436 L946.4 475.1 L936.2 504 L922.6 527.8 L902.2 543.1 L873.3 549.9 L858 560.1 L824.7 584.7 L819 589.3" fill="none" stroke="#9478e6" stroke-width="3" stroke-linejoin="round" stroke-linecap="round" />
<path d="M771.1 541.4 L781.4 542.5 L799.6 538 L815.6 584.7 L819 589.3" fill="none" stroke="#9478e6" stroke-width="2.8" stroke-linejoin="round" stroke-linecap="round" />
<path d="M818.9 621.8 L810.3 630.3 L820.6 633.8 L817.1 695.3 L847.9 686.8 L856.5 681.6 L854.8 675.8" fill="none" stroke="#9478e6" stroke-width="2.8" stroke-linejoin="round" stroke-linecap="round" />
<path d="M708.4 567.6 L703.9 557.4 L749.5 534.5 L767.7 526.6" fill="none" stroke="#9478e6" stroke-width="2.6" stroke-linejoin="round" stroke-linecap="round" />
<path d="M690 535 L700 548 L715 556" fill="none" stroke="#d23fc6" stroke-width="3" stroke-linejoin="round" stroke-linecap="round" />
<circle cx="950.5" cy="426.6" r="4.2" fill="#9478e6"/>
<path d="M842.8 410.4 C838.9 404.4 828.8 397.7 828.8 389.0 A14.0 14.0 0 0 1 856.8 389.0 C856.8 397.7 846.7 404.4 842.8 410.4 Z" fill="#9a7fe8" stroke="#14142e" stroke-width="1.3" stroke-linejoin="round"/>
<text x="842.8" y="396.8" font-family="Liberation Sans, sans-serif" font-size="17.5" font-weight="700" fill="#fff" text-anchor="middle">30</text>
<path d="M1004.5 463.4 C1000.6 457.4 990.5 450.7 990.5 442.0 A14.0 14.0 0 0 1 1018.5 442.0 C1018.5 450.7 1008.4 457.4 1004.5 463.4 Z" fill="#9a7fe8" stroke="#14142e" stroke-width="1.3" stroke-linejoin="round"/>
<text x="1004.5" y="449.8" font-family="Liberation Sans, sans-serif" font-size="17.5" font-weight="700" fill="#fff" text-anchor="middle">29</text>
<path d="M818.9 621.0 C815.0 615.0 804.9 608.3 804.9 599.6 A14.0 14.0 0 0 1 832.9 599.6 C832.9 608.3 822.8 615.0 818.9 621.0 Z" fill="#9a7fe8" stroke="#14142e" stroke-width="1.3" stroke-linejoin="round"/>
<text x="818.9" y="607.4" font-family="Liberation Sans, sans-serif" font-size="17.5" font-weight="700" fill="#fff" text-anchor="middle">28</text>
<path d="M854.8 675.7 C850.9 669.7 840.8 663.0 840.8 654.3000000000001 A14.0 14.0 0 0 1 868.8 654.3000000000001 C868.8 663.0 858.7 669.7 854.8 675.7 Z" fill="#9a7fe8" stroke="#14142e" stroke-width="1.3" stroke-linejoin="round"/>
<text x="854.8" y="662.1" font-family="Liberation Sans, sans-serif" font-size="17.5" font-weight="700" fill="#fff" text-anchor="middle">27</text>
<path d="M558.3 465.8 C554.4 459.8 544.3 453.1 544.3 444.40000000000003 A14.0 14.0 0 0 1 572.3 444.40000000000003 C572.3 453.1 562.2 459.8 558.3 465.8 Z" fill="#4a70e2" stroke="#14142e" stroke-width="1.3" stroke-linejoin="round"/>
<text x="558.3" y="452.2" font-family="Liberation Sans, sans-serif" font-size="17.5" font-weight="700" fill="#fff" text-anchor="middle">8</text>
<path d="M556.1 543.0 C552.2 537.0 542.1 530.3 542.1 521.6 A14.0 14.0 0 0 1 570.1 521.6 C570.1 530.3 560.0 537.0 556.1 543.0 Z" fill="#4a70e2" stroke="#14142e" stroke-width="1.3" stroke-linejoin="round"/>
<text x="556.1" y="529.4" font-family="Liberation Sans, sans-serif" font-size="17.5" font-weight="700" fill="#fff" text-anchor="middle">9</text>
<path d="M601.8 537.6 C597.9 531.6 587.8 524.9 587.8 516.2 A14.0 14.0 0 0 1 615.8 516.2 C615.8 524.9 605.7 531.6 601.8 537.6 Z" fill="#4a70e2" stroke="#14142e" stroke-width="1.3" stroke-linejoin="round"/>
<path d="M596.3 531.0 C592.4 525.0 582.3 518.3 582.3 509.6 A14.0 14.0 0 0 1 610.3 509.6 C610.3 518.3 600.2 525.0 596.3 531.0 Z" fill="#4a70e2" stroke="#14142e" stroke-width="1.3" stroke-linejoin="round"/>
<text x="596.3" y="517.4" font-family="Liberation Sans, sans-serif" font-size="17.5" font-weight="700" fill="#fff" text-anchor="middle">11</text>
<path d="M601.8 552.8 C597.9 546.8 587.8 540.1 587.8 531.4 A14.0 14.0 0 0 1 615.8 531.4 C615.8 540.1 605.7 546.8 601.8 552.8 Z" fill="#4a70e2" stroke="#14142e" stroke-width="1.3" stroke-linejoin="round"/>
<text x="601.8" y="539.2" font-family="Liberation Sans, sans-serif" font-size="17.5" font-weight="700" fill="#fff" text-anchor="middle">12</text>
<path d="M635.1 548.4 C631.2 542.4 621.1 535.7 621.1 527.0 A14.0 14.0 0 0 1 649.1 527.0 C649.1 535.7 639.0 542.4 635.1 548.4 Z" fill="#4a70e2" stroke="#14142e" stroke-width="1.3" stroke-linejoin="round"/>
<text x="635.1" y="534.8" font-family="Liberation Sans, sans-serif" font-size="17.5" font-weight="700" fill="#fff" text-anchor="middle">13</text>
<path d="M582.2 576.7 C578.3 570.7 568.2 564.0 568.2 555.3000000000001 A14.0 14.0 0 0 1 596.2 555.3000000000001 C596.2 564.0 586.1 570.7 582.2 576.7 Z" fill="#4a70e2" stroke="#14142e" stroke-width="1.3" stroke-linejoin="round"/>
<path d="M576.8 585.4 C572.9 579.4 562.8 572.7 562.8 564.0 A14.0 14.0 0 0 1 590.8 564.0 C590.8 572.7 580.7 579.4 576.8 585.4 Z" fill="#4a70e2" stroke="#14142e" stroke-width="1.3" stroke-linejoin="round"/>
<text x="576.8" y="571.8" font-family="Liberation Sans, sans-serif" font-size="17.5" font-weight="700" fill="#fff" text-anchor="middle">15</text>
<path d="M608.7 580.4 C604.8 574.4 594.7 567.7 594.7 559.0 A14.0 14.0 0 0 1 622.7 559.0 C622.7 567.7 612.6 574.4 608.7 580.4 Z" fill="#4a70e2" stroke="#14142e" stroke-width="1.3" stroke-linejoin="round"/>
<text x="608.7" y="566.8" font-family="Liberation Sans, sans-serif" font-size="17.5" font-weight="700" fill="#fff" text-anchor="middle">16</text>
<path d="M638.8 582.2 C634.9 576.2 624.8 569.5 624.8 560.8000000000001 A14.0 14.0 0 0 1 652.8 560.8000000000001 C652.8 569.5 642.7 576.2 638.8 582.2 Z" fill="#4a70e2" stroke="#14142e" stroke-width="1.3" stroke-linejoin="round"/>
<text x="638.8" y="568.6" font-family="Liberation Sans, sans-serif" font-size="17.5" font-weight="700" fill="#fff" text-anchor="middle">1</text>
<path d="M653.3 581.7 C649.4 575.7 639.3 569.0 639.3 560.3000000000001 A14.0 14.0 0 0 1 667.3 560.3000000000001 C667.3 569.0 657.2 575.7 653.3 581.7 Z" fill="#4a70e2" stroke="#14142e" stroke-width="1.3" stroke-linejoin="round"/>
<text x="653.3" y="568.1" font-family="Liberation Sans, sans-serif" font-size="17.5" font-weight="700" fill="#fff" text-anchor="middle">18</text>
<path d="M474.7 854.5 C470.8 848.5 460.7 841.8 460.7 833.1 A14.0 14.0 0 0 1 488.7 833.1 C488.7 841.8 478.6 848.5 474.7 854.5 Z" fill="#4a70e2" stroke="#14142e" stroke-width="1.3" stroke-linejoin="round"/>
<text x="474.7" y="840.9" font-family="Liberation Sans, sans-serif" font-size="17.5" font-weight="700" fill="#fff" text-anchor="middle">1</text>
<path d="M690.5 441.5 C686.6 435.5 676.5 428.8 676.5 420.1 A14.0 14.0 0 0 1 704.5 420.1 C704.5 428.8 694.4 435.5 690.5 441.5 Z" fill="#9a7fe8" stroke="#14142e" stroke-width="1.3" stroke-linejoin="round"/>
<path d="M692.0 445.0 C688.1 439.0 678.0 432.3 678.0 423.6 A14.0 14.0 0 0 1 706.0 423.6 C706.0 432.3 695.9 439.0 692.0 445.0 Z" fill="#9a7fe8" stroke="#14142e" stroke-width="1.3" stroke-linejoin="round"/>
<path d="M695.3 450.5 C691.4 444.5 681.3 437.8 681.3 429.1 A14.0 14.0 0 0 1 709.3 429.1 C709.3 437.8 699.2 444.5 695.3 450.5 Z" fill="#9a7fe8" stroke="#14142e" stroke-width="1.3" stroke-linejoin="round"/>
<text x="695.3" y="436.9" font-family="Liberation Sans, sans-serif" font-size="17.5" font-weight="700" fill="#fff" text-anchor="middle">2</text>
<path d="M701.0 463.0 C697.1 457.0 687.0 450.3 687.0 441.6 A14.0 14.0 0 0 1 715.0 441.6 C715.0 450.3 704.9 457.0 701.0 463.0 Z" fill="#9a7fe8" stroke="#14142e" stroke-width="1.3" stroke-linejoin="round"/>
<path d="M703.0 468.5 C699.1 462.5 689.0 455.8 689.0 447.1 A14.0 14.0 0 0 1 717.0 447.1 C717.0 455.8 706.9 462.5 703.0 468.5 Z" fill="#9a7fe8" stroke="#14142e" stroke-width="1.3" stroke-linejoin="round"/>
<path d="M696.4 444.8 L703.0 441.8 L709.6 444.8 L703.0 447.8 Z" fill="#fff" stroke="#fff" stroke-width="1.2" stroke-linejoin="round"/>
<path d="M696.4 449.0 L703.0 446.0 L709.6 449.0 L703.0 452.0 Z" fill="none" stroke="#fff" stroke-width="1.2" stroke-linejoin="round"/>
<path d="M696.4 453.2 L703.0 450.2 L709.6 453.2 L703.0 456.2 Z" fill="none" stroke="#fff" stroke-width="1.2" stroke-linejoin="round"/>
<circle cx="713.4" cy="438.7" r="8" fill="#e0625c"/>
<text x="713.4" y="443.09999999999997" font-family="Liberation Sans, sans-serif" font-size="12.5" font-weight="700" fill="#fff" text-anchor="middle">2</text>
<path d="M681.2 497.3 C677.3 491.3 667.2 484.6 667.2 475.90000000000003 A14.0 14.0 0 0 1 695.2 475.90000000000003 C695.2 484.6 685.1 491.3 681.2 497.3 Z" fill="#9a7fe8" stroke="#14142e" stroke-width="1.3" stroke-linejoin="round"/>
<circle cx="681.2" cy="475.90000000000003" r="10.5" fill="#fff"/><circle cx="681.2" cy="475.90000000000003" r="6.5" fill="#9a7fe8"/>
<path d="M662.7 507.0 C658.8 501.0 648.7 494.3 648.7 485.6 A14.0 14.0 0 0 1 676.7 485.6 C676.7 494.3 666.6 501.0 662.7 507.0 Z" fill="#9a7fe8" stroke="#14142e" stroke-width="1.3" stroke-linejoin="round"/>
<path d="M695.3 506.0 C691.4 500.0 681.3 493.3 681.3 484.6 A14.0 14.0 0 0 1 709.3 484.6 C709.3 493.3 699.2 500.0 695.3 506.0 Z" fill="#9a7fe8" stroke="#14142e" stroke-width="1.3" stroke-linejoin="round"/>
<path d="M670.3 517.0 C666.4 511.0 656.3 504.3 656.3 495.6 A14.0 14.0 0 0 1 684.3 495.6 C684.3 504.3 674.2 511.0 670.3 517.0 Z" fill="#9a7fe8" stroke="#14142e" stroke-width="1.3" stroke-linejoin="round"/>
<path d="M678.0 524.5 C674.1 518.5 664.0 511.8 664.0 503.1 A14.0 14.0 0 0 1 692.0 503.1 C692.0 511.8 681.9 518.5 678.0 524.5 Z" fill="#9a7fe8" stroke="#14142e" stroke-width="1.3" stroke-linejoin="round"/>
<path d="M725.8 488.6 C721.9 482.6 711.8 475.9 711.8 467.20000000000005 A14.0 14.0 0 0 1 739.8 467.20000000000005 C739.8 475.9 729.7 482.6 725.8 488.6 Z" fill="#d23fc6" stroke="#14142e" stroke-width="1.3" stroke-linejoin="round"/>
<text x="725.8" y="475.0" font-family="Liberation Sans, sans-serif" font-size="17.5" font-weight="700" fill="#fff" text-anchor="middle">17</text>
<path d="M731.0 500.0 C727.1 494.0 717.0 487.3 717.0 478.6 A14.0 14.0 0 0 1 745.0 478.6 C745.0 487.3 734.9 494.0 731.0 500.0 Z" fill="#d23fc6" stroke="#14142e" stroke-width="1.3" stroke-linejoin="round"/>
<path d="M706.2 514.7 C702.3 508.7 692.2 502.0 692.2 493.3 A14.0 14.0 0 0 1 720.2 493.3 C720.2 502.0 710.1 508.7 706.2 514.7 Z" fill="#d23fc6" stroke="#14142e" stroke-width="1.3" stroke-linejoin="round"/>
<path d="M699.6 491.0 L706.2 488.0 L712.8000000000001 491.0 L706.2 494.0 Z" fill="#fff" stroke="#fff" stroke-width="1.2" stroke-linejoin="round"/>
<path d="M699.6 495.2 L706.2 492.2 L712.8000000000001 495.2 L706.2 498.2 Z" fill="none" stroke="#fff" stroke-width="1.2" stroke-linejoin="round"/>
<path d="M699.6 499.4 L706.2 496.4 L712.8000000000001 499.4 L706.2 502.4 Z" fill="none" stroke="#fff" stroke-width="1.2" stroke-linejoin="round"/>
<path d="M685.5 536.5 C681.6 530.5 671.5 523.8 671.5 515.1 A14.0 14.0 0 0 1 699.5 515.1 C699.5 523.8 689.4 530.5 685.5 536.5 Z" fill="#9a7fe8" stroke="#14142e" stroke-width="1.3" stroke-linejoin="round"/>
<text x="685.5" y="522.9" font-family="Liberation Sans, sans-serif" font-size="17.5" font-weight="700" fill="#fff" text-anchor="middle">7</text>
<path d="M755.1 510.4 C751.2 504.4 741.1 497.7 741.1 489.0 A14.0 14.0 0 0 1 769.1 489.0 C769.1 497.7 759.0 504.4 755.1 510.4 Z" fill="#9a7fe8" stroke="#14142e" stroke-width="1.3" stroke-linejoin="round"/>
<text x="755.1" y="496.8" font-family="Liberation Sans, sans-serif" font-size="17.5" font-weight="700" fill="#fff" text-anchor="middle">16</text>
<path d="M742.1 536.5 C738.2 530.5 728.1 523.8 728.1 515.1 A14.0 14.0 0 0 1 756.1 515.1 C756.1 523.8 746.0 530.5 742.1 536.5 Z" fill="#9a7fe8" stroke="#14142e" stroke-width="1.3" stroke-linejoin="round"/>
<text x="742.1" y="522.9" font-family="Liberation Sans, sans-serif" font-size="17.5" font-weight="700" fill="#fff" text-anchor="middle">10</text>
<path d="M757.0 533.0 C753.1 527.0 743.0 520.3 743.0 511.6 A14.0 14.0 0 0 1 771.0 511.6 C771.0 520.3 760.9 527.0 757.0 533.0 Z" fill="#9a7fe8" stroke="#14142e" stroke-width="1.3" stroke-linejoin="round"/>
<path d="M720.3 520.5 C716.4 514.5 706.3 507.8 706.3 499.1 A14.0 14.0 0 0 1 734.3 499.1 C734.3 507.8 724.2 514.5 720.3 520.5 Z" fill="#d23fc6" stroke="#14142e" stroke-width="1.3" stroke-linejoin="round"/>
<path d="M713.6999999999999 496.8 L720.3 493.8 L726.9 496.8 L720.3 499.8 Z" fill="#fff" stroke="#fff" stroke-width="1.2" stroke-linejoin="round"/>
<path d="M713.6999999999999 501.0 L720.3 498.0 L726.9 501.0 L720.3 504.0 Z" fill="none" stroke="#fff" stroke-width="1.2" stroke-linejoin="round"/>
<path d="M713.6999999999999 505.2 L720.3 502.2 L726.9 505.2 L720.3 508.2 Z" fill="none" stroke="#fff" stroke-width="1.2" stroke-linejoin="round"/>
<circle cx="717.5" cy="482.2" r="8" fill="#e0625c"/>
<text x="717.5" y="486.59999999999997" font-family="Liberation Sans, sans-serif" font-size="12.5" font-weight="700" fill="#fff" text-anchor="middle">2</text>
<circle cx="730.1" cy="475.0" r="8" fill="#e0625c"/>
<text x="730.1" y="479.4" font-family="Liberation Sans, sans-serif" font-size="12.5" font-weight="700" fill="#fff" text-anchor="middle">2</text>
<circle cx="731.2" cy="488.8" r="8" fill="#e0625c"/>
<text x="731.2" y="493.2" font-family="Liberation Sans, sans-serif" font-size="12.5" font-weight="700" fill="#fff" text-anchor="middle">2</text>
<path d="M771.0 515.0 C767.1 509.0 757.0 502.3 757.0 493.6 A14.0 14.0 0 0 1 785.0 493.6 C785.0 502.3 774.9 509.0 771.0 515.0 Z" fill="#9a7fe8" stroke="#14142e" stroke-width="1.3" stroke-linejoin="round"/>
<path d="M774.0 518.0 C770.1 512.0 760.0 505.3 760.0 496.6 A14.0 14.0 0 0 1 788.0 496.6 C788.0 505.3 777.9 512.0 774.0 518.0 Z" fill="#9a7fe8" stroke="#14142e" stroke-width="1.3" stroke-linejoin="round"/>
<path d="M777.0 522.0 C773.1 516.0 763.0 509.3 763.0 500.6 A14.0 14.0 0 0 1 791.0 500.6 C791.0 509.3 780.9 516.0 777.0 522.0 Z" fill="#9a7fe8" stroke="#14142e" stroke-width="1.3" stroke-linejoin="round"/>
<path d="M778.5 529.0 C774.6 523.0 764.5 516.3 764.5 507.6 A14.0 14.0 0 0 1 792.5 507.6 C792.5 516.3 782.4 523.0 778.5 529.0 Z" fill="#9a7fe8" stroke="#14142e" stroke-width="1.3" stroke-linejoin="round"/>
<path d="M779.7 538.2 C775.8 532.2 765.7 525.5 765.7 516.8000000000001 A14.0 14.0 0 0 1 793.7 516.8000000000001 C793.7 525.5 783.6 532.2 779.7 538.2 Z" fill="#9a7fe8" stroke="#14142e" stroke-width="1.3" stroke-linejoin="round"/>
<text x="779.7" y="524.6" font-family="Liberation Sans, sans-serif" font-size="17.5" font-weight="700" fill="#fff" text-anchor="middle">26</text>
<path d="M706.0 560.0 C702.1 554.0 692.0 547.3 692.0 538.6 A14.0 14.0 0 0 1 720.0 538.6 C720.0 547.3 709.9 554.0 706.0 560.0 Z" fill="#9a7fe8" stroke="#14142e" stroke-width="1.3" stroke-linejoin="round"/>
<path d="M709.0 561.0 C705.1 555.0 695.0 548.3 695.0 539.6 A14.0 14.0 0 0 1 723.0 539.6 C723.0 548.3 712.9 555.0 709.0 561.0 Z" fill="#9a7fe8" stroke="#14142e" stroke-width="1.3" stroke-linejoin="round"/>
<path d="M712.3 561.5 C708.4 555.5 698.3 548.8 698.3 540.1 A14.0 14.0 0 0 1 726.3 540.1 C726.3 548.8 716.2 555.5 712.3 561.5 Z" fill="#9a7fe8" stroke="#14142e" stroke-width="1.3" stroke-linejoin="round"/>
<text x="712.3" y="547.9" font-family="Liberation Sans, sans-serif" font-size="17.5" font-weight="700" fill="#fff" text-anchor="middle">1</text>
<path d="M725.8 556.5 C721.9 550.5 711.8 543.8 711.8 535.1 A14.0 14.0 0 0 1 739.8 535.1 C739.8 543.8 729.7 550.5 725.8 556.5 Z" fill="#9a7fe8" stroke="#14142e" stroke-width="1.3" stroke-linejoin="round"/>
<text x="725.8" y="542.9" font-family="Liberation Sans, sans-serif" font-size="17.5" font-weight="700" fill="#fff" text-anchor="middle">11</text>
<path d="M683.4 534.2 L697.0 541.9000000000001 V557.5 L683.4 565.2 L669.8 557.5 V541.9000000000001 Z" fill="#3b63cf"/>
<path d="M683.4 558.1 C683.4 558.1 677.8 551.7 677.8 547.5 A5.6 5.6 0 0 1 689.0 547.5 C689.0 551.7 683.4 558.1 683.4 558.1 Z" fill="#fff"/><circle cx="683.4" cy="547.4000000000001" r="2.3" fill="#3b63cf"/>
<rect x="1014.8" y="659.4" width="47.8" height="96.4" fill="#fff" rx="1" style="filter:drop-shadow(0 1px 3px rgba(0,0,0,.25))"/>
<path d="M1029.4 683.3 H1048 M1038.7 674 V692.6 M1029.4 731.9 H1048" stroke="#666" stroke-width="2.4" fill="none"/>
<path d="M1021.5 707.8 H1056" stroke="#e6e6e6" stroke-width="1"/>
</g></svg>

<!-- ================= SIDEBAR ================= -->
<div class="abs" style="left:95px;top:161px;width:274px;height:717px;background:#fff"></div>
<div class="abs" style="left:369px;top:161px;width:1px;height:717px;background:#e2e2e2"></div>
<div class="abs" style="left:107px;top:340px;width:250px;height:38px;border-radius:6px;background:#eff6fd"></div>

<!-- ================= TOOLBAR ================= -->
<div class="abs" style="left:370px;top:161px;width:1481px;height:71px;background:#fff"></div>
<div class="abs" style="left:370px;top:232px;width:1481px;height:1px;background:#dcdcdc"></div>
<!-- date control -->
<div class="abs" style="left:614px;top:176px;width:272px;height:41px;border:1px solid #d9d9d9;border-radius:3px;background:#fff"></div>
<div class="abs" style="left:671px;top:177px;width:170px;height:39px;background:#f8f8f8"></div>
<div class="abs" style="left:670px;top:177px;width:1px;height:39px;background:#dcdcdc"></div>
<div class="abs" style="left:714px;top:177px;width:1px;height:39px;background:#e4e4e4"></div>
<div class="abs" style="left:841px;top:177px;width:1px;height:39px;background:#dcdcdc"></div>
<!-- reoptimize button -->
<div class="abs" style="left:1380px;top:178px;width:246px;height:38px;border-radius:2px;background:#2f6ab0"></div>
<div class="abs" style="left:1632.2px;top:177.4px;width:38.4px;height:38.4px;border-radius:50%;background:#2f6ab0"></div>
<div class="abs" style="left:1679.6px;top:177.4px;width:38.4px;height:38.4px;border-radius:50%;background:#5fae57"></div>
<div class="abs" style="left:1726.5px;top:177.4px;width:38.4px;height:38.4px;border-radius:50%;background:#5fae57"></div>
<div class="abs" style="left:1770.8px;top:177.4px;width:38.4px;height:38.4px;border-radius:50%;background:#2f6ab0"></div>

<!-- ================= RIGHT PANEL ================= -->
<div class="abs" style="left:1076px;top:233px;width:775px;height:645px;background:#fff"></div>
<div class="abs" style="left:1075px;top:233px;width:1px;height:645px;background:#dfe6e2"></div>
<div class="abs" style="left:1036px;top:233px;width:38.5px;height:60px;border-radius:3px;background:#2f6ab0;box-shadow:0 3px 8px rgba(0,0,0,.3)"></div>
<svg style="left:1036px;top:233px" width="39" height="60" viewBox="1036 233 39 60"><path d="M1051.8 251.5 L1051.8 274 L1062 262.8 Z" fill="none" stroke="#fff" stroke-width="2.2" stroke-linejoin="miter"/></svg>
<div class="abs" style="left:1088px;top:243px;width:166px;height:37.6px;border-radius:4px;background:#efefef"></div>
<svg style="left:1228px;top:256px" width="16" height="12" viewBox="1228 256 16 12"><path d="M1230.5 259.2 L1236.4 265 L1242.3 259.2" fill="none" stroke="#666" stroke-width="1.3" stroke-linecap="round" stroke-linejoin="round"/></svg>
<div class="abs" style="left:1085px;top:290.2px;width:756.2px;height:71.5px;background:#2f6ab0"></div>
<div class="abs" style="left:1117.6px;top:315.8px;width:21.3px;height:21.3px;border-radius:2px;background:#4a98e9"></div>
<svg style="left:1117.6px;top:315.8px" width="21.3" height="21.3" viewBox="0 0 21 21"><path d="M4.2 11.2 L8.6 15.4 L17 6" fill="none" stroke="#fff" stroke-width="2.5" stroke-linecap="butt" stroke-linejoin="miter"/></svg>
<svg style="left:1798px;top:316px" width="20" height="14" viewBox="1798 316 20 14"><path d="M1801.8 325.8 L1807.9 319.6 L1814 325.8" fill="none" stroke="#fff" stroke-width="2.2" stroke-linecap="round" stroke-linejoin="round"/></svg>
<div class="abs" style="left:1087px;top:372.3px;width:752.5px;height:95.6px;border:1px solid #dcdcdc;border-radius:2px;background:#fff"></div>
<div class="abs" style="left:1088px;top:373.3px;width:750.5px;height:43.5px;background:#efefef"></div>
<div class="abs" style="left:1098.2px;top:383.8px;width:21.3px;height:21.3px;border-radius:2px;background:#4a98e9"></div>
<svg style="left:1098.2px;top:383.8px" width="21.3" height="21.3" viewBox="0 0 21 21"><path d="M4.2 11.2 L8.6 15.4 L17 6" fill="none" stroke="#fff" stroke-width="2.5" stroke-linecap="butt" stroke-linejoin="miter"/></svg>
<div class="abs" style="left:1130.2px;top:382.0px;width:24.6px;height:24.6px;border-radius:50%;background:#d63dc9;border:1.2px solid #1a1a2a"></div>
<div class="abs" style="left:1638px;top:383.4px;width:114px;height:21.6px;border-radius:3px;background:#f5ecdc"></div>
<div class="abs" style="left:1792.6px;top:392.9px;width:2.4px;height:2.4px;border-radius:50%;background:#222"></div>
<div class="abs" style="left:1799.9px;top:392.9px;width:2.4px;height:2.4px;border-radius:50%;background:#222"></div>
<div class="abs" style="left:1807.2px;top:392.9px;width:2.4px;height:2.4px;border-radius:50%;background:#222"></div>
<svg style="left:0;top:0" width="1946" height="965" viewBox="0 0 1946 965"><g transform="translate(1115.9,433.7)" fill="none" stroke="#5a5a5a" stroke-width="1.35" stroke-linejoin="miter"><path d="M0.7 0.7 V17.5"/><path d="M0.7 0.9 H8.3 V8.3 H0.7"/><path d="M8.3 2.6 H15.9 V10.2 H8.3"/></g><g transform="translate(1227.0,433.0)"><path d="M0.7 0.4 V17.7" stroke="#5a5a5a" stroke-width="1.35" fill="none"/><rect x="0.7" y="0.6" width="15.6" height="10.6" fill="none" stroke="#5a5a5a" stroke-width="1.2"/><rect x="0.70" y="0.60" width="2.60" height="2.65" fill="#5a5a5a"/><rect x="5.90" y="0.60" width="2.60" height="2.65" fill="#5a5a5a"/><rect x="11.10" y="0.60" width="2.60" height="2.65" fill="#5a5a5a"/><rect x="3.30" y="3.25" width="2.60" height="2.65" fill="#5a5a5a"/><rect x="8.50" y="3.25" width="2.60" height="2.65" fill="#5a5a5a"/><rect x="13.70" y="3.25" width="2.60" height="2.65" fill="#5a5a5a"/><rect x="0.70" y="5.90" width="2.60" height="2.65" fill="#5a5a5a"/><rect x="5.90" y="5.90" width="2.60" height="2.65" fill="#5a5a5a"/><rect x="11.10" y="5.90" width="2.60" height="2.65" fill="#5a5a5a"/><rect x="3.30" y="8.55" width="2.60" height="2.65" fill="#5a5a5a"/><rect x="8.50" y="8.55" width="2.60" height="2.65" fill="#5a5a5a"/><rect x="13.70" y="8.55" width="2.60" height="2.65" fill="#5a5a5a"/></g><g transform="translate(1318.7,434.3)" fill="none" stroke="#5a5a5a" stroke-width="1.4" stroke-linejoin="miter"><path d="M5 0.7 H17.7 L21.8 14.3 H0.9 Z"/><path d="M11.35 2.4 V5.2 M11.35 7.4 V10 M11.35 12 V14"/></g><g transform="translate(1448.2,432.7)" fill="none" stroke="#5a5a5a" stroke-width="1.35" stroke-linejoin="round"><path d="M6.9 17.9 C6.9 17.9 0.7 10.9 0.7 6.8 A6.2 6.2 0 0 1 13.1 6.8 C13.1 10.9 6.9 17.9 6.9 17.9 Z"/><circle cx="6.9" cy="6.6" r="0.9" fill="#5a5a5a" stroke="none"/></g><g transform="translate(1541.3,434.4)" fill="none" stroke="#5a5a5a" stroke-width="1.35" stroke-linejoin="round" stroke-linecap="round"><path d="M3.4 5.6 L4.8 1.4 Q5 0.7 5.8 0.7 H13.5 Q14.3 0.7 14.5 1.4 L15.9 5.6"/><path d="M0.6 4.6 H18.7"/><path d="M2.2 5.6 H17.1 Q17.9 5.6 17.9 6.6 V14 H14.6 V12.4 H4.7 V14 H1.4 V6.6 Q1.4 5.6 2.2 5.6 Z"/><path d="M6.6 10.9 V9.6 H12.7 V10.9"/><circle cx="4.3" cy="8.4" r="0.8" fill="#5a5a5a" stroke="none"/><circle cx="15" cy="8.4" r="0.8" fill="#5a5a5a" stroke="none"/></g><g transform="translate(1653.2,434.0)" fill="none" stroke="#5a5a5a" stroke-width="1.4" stroke-linecap="round" stroke-linejoin="round"><ellipse cx="7.5" cy="5.5" rx="4.6" ry="4.8"/><path d="M0.7 15.7 C1 12 2.6 10.2 4.6 9.4 C5.4 11.6 6.4 12.6 7.5 12.6 C8.6 12.6 9.6 11.6 10.4 9.4 C12.4 10.2 14 12 14.3 15.7"/></g><g transform="translate(1754.5,432.7)" fill="none" stroke="#5a5a5a" stroke-width="1.35" stroke-linecap="round" stroke-linejoin="round"><circle cx="9.5" cy="9.5" r="8.8"/><path d="M9.5 4.6 V14 M5.6 10.3 L9.5 14.2 L13.4 10.3"/></g></svg>
<div class="abs" style="left:1087px;top:478.7px;width:752.5px;height:95.6px;border:1px solid #dcdcdc;border-radius:2px;background:#fff"></div>
<div class="abs" style="left:1088px;top:479.7px;width:750.5px;height:43.5px;background:#efefef"></div>
<div class="abs" style="left:1098.2px;top:490.2px;width:21.3px;height:21.3px;border-radius:2px;background:#4a98e9"></div>
<svg style="left:1098.2px;top:490.2px" width="21.3" height="21.3" viewBox="0 0 21 21"><path d="M4.2 11.2 L8.6 15.4 L17 6" fill="none" stroke="#fff" stroke-width="2.5" stroke-linecap="butt" stroke-linejoin="miter"/></svg>
<div class="abs" style="left:1130.2px;top:488.4px;width:24.6px;height:24.6px;border-radius:50%;background:#9a7ce9;border:1.2px solid #1a1a2a"></div>
<div class="abs" style="left:1638px;top:489.8px;width:114px;height:21.6px;border-radius:3px;background:#f5ecdc"></div>
<div class="abs" style="left:1792.6px;top:499.3px;width:2.4px;height:2.4px;border-radius:50%;background:#222"></div>
<div class="abs" style="left:1799.9px;top:499.3px;width:2.4px;height:2.4px;border-radius:50%;background:#222"></div>
<div class="abs" style="left:1807.2px;top:499.3px;width:2.4px;height:2.4px;border-radius:50%;background:#222"></div>
<svg style="left:0;top:0" width="1946" height="965" viewBox="0 0 1946 965"><g transform="translate(1115.9,540.1)" fill="none" stroke="#5a5a5a" stroke-width="1.35" stroke-linejoin="miter"><path d="M0.7 0.7 V17.5"/><path d="M0.7 0.9 H8.3 V8.3 H0.7"/><path d="M8.3 2.6 H15.9 V10.2 H8.3"/></g><g transform="translate(1227.0,539.4)"><path d="M0.7 0.4 V17.7" stroke="#5a5a5a" stroke-width="1.35" fill="none"/><rect x="0.7" y="0.6" width="15.6" height="10.6" fill="none" stroke="#5a5a5a" stroke-width="1.2"/><rect x="0.70" y="0.60" width="2.60" height="2.65" fill="#5a5a5a"/><rect x="5.90" y="0.60" width="2.60" height="2.65" fill="#5a5a5a"/><rect x="11.10" y="0.60" width="2.60" height="2.65" fill="#5a5a5a"/><rect x="3.30" y="3.25" width="2.60" height="2.65" fill="#5a5a5a"/><rect x="8.50" y="3.25" width="2.60" height="2.65" fill="#5a5a5a"/><rect x="13.70" y="3.25" width="2.60" height="2.65" fill="#5a5a5a"/><rect x="0.70" y="5.90" width="2.60" height="2.65" fill="#5a5a5a"/><rect x="5.90" y="5.90" width="2.60" height="2.65" fill="#5a5a5a"/><rect x="11.10" y="5.90" width="2.60" height="2.65" fill="#5a5a5a"/><rect x="3.30" y="8.55" width="2.60" height="2.65" fill="#5a5a5a"/><rect x="8.50" y="8.55" width="2.60" height="2.65" fill="#5a5a5a"/><rect x="13.70" y="8.55" width="2.60" height="2.65" fill="#5a5a5a"/></g><g transform="translate(1314.8,540.7)" fill="none" stroke="#5a5a5a" stroke-width="1.4" stroke-linejoin="miter"><path d="M5 0.7 H17.7 L21.8 14.3 H0.9 Z"/><path d="M11.35 2.4 V5.2 M11.35 7.4 V10 M11.35 12 V14"/></g><g transform="translate(1446.9,539.1)" fill="none" stroke="#5a5a5a" stroke-width="1.35" stroke-linejoin="round"><path d="M6.9 17.9 C6.9 17.9 0.7 10.9 0.7 6.8 A6.2 6.2 0 0 1 13.1 6.8 C13.1 10.9 6.9 17.9 6.9 17.9 Z"/><circle cx="6.9" cy="6.6" r="0.9" fill="#5a5a5a" stroke="none"/></g><g transform="translate(1545.2,540.8)" fill="none" stroke="#5a5a5a" stroke-width="1.35" stroke-linejoin="round" stroke-linecap="round"><path d="M3.4 5.6 L4.8 1.4 Q5 0.7 5.8 0.7 H13.5 Q14.3 0.7 14.5 1.4 L15.9 5.6"/><path d="M0.6 4.6 H18.7"/><path d="M2.2 5.6 H17.1 Q17.9 5.6 17.9 6.6 V14 H14.6 V12.4 H4.7 V14 H1.4 V6.6 Q1.4 5.6 2.2 5.6 Z"/><path d="M6.6 10.9 V9.6 H12.7 V10.9"/><circle cx="4.3" cy="8.4" r="0.8" fill="#5a5a5a" stroke="none"/><circle cx="15" cy="8.4" r="0.8" fill="#5a5a5a" stroke="none"/></g><g transform="translate(1652.1,540.4)" fill="none" stroke="#5a5a5a" stroke-width="1.4" stroke-linecap="round" stroke-linejoin="round"><ellipse cx="7.5" cy="5.5" rx="4.6" ry="4.8"/><path d="M0.7 15.7 C1 12 2.6 10.2 4.6 9.4 C5.4 11.6 6.4 12.6 7.5 12.6 C8.6 12.6 9.6 11.6 10.4 9.4 C12.4 10.2 14 12 14.3 15.7"/></g><g transform="translate(1744.2,539.1)" fill="none" stroke="#5a5a5a" stroke-width="1.35" stroke-linecap="round" stroke-linejoin="round"><circle cx="9.5" cy="9.5" r="8.8"/><path d="M9.5 4.6 V14 M5.6 10.3 L9.5 14.2 L13.4 10.3"/></g></svg>
<div class="abs" style="left:1087px;top:585.1px;width:752.5px;height:95.6px;border:1px solid #dcdcdc;border-radius:2px;background:#fff"></div>
<div class="abs" style="left:1088px;top:586.1px;width:750.5px;height:43.5px;background:#efefef"></div>
<div class="abs" style="left:1098.2px;top:596.6px;width:21.3px;height:21.3px;border-radius:2px;background:#4a98e9"></div>
<svg style="left:1098.2px;top:596.6px" width="21.3" height="21.3" viewBox="0 0 21 21"><path d="M4.2 11.2 L8.6 15.4 L17 6" fill="none" stroke="#fff" stroke-width="2.5" stroke-linecap="butt" stroke-linejoin="miter"/></svg>
<div class="abs" style="left:1130.2px;top:594.8px;width:24.6px;height:24.6px;border-radius:50%;background:#4db693;border:1.2px solid #1a1a2a"></div>
<div class="abs" style="left:1638px;top:596.2px;width:114px;height:21.6px;border-radius:3px;background:#f5ecdc"></div>
<div class="abs" style="left:1792.6px;top:605.7px;width:2.4px;height:2.4px;border-radius:50%;background:#222"></div>
<div class="abs" style="left:1799.9px;top:605.7px;width:2.4px;height:2.4px;border-radius:50%;background:#222"></div>
<div class="abs" style="left:1807.2px;top:605.7px;width:2.4px;height:2.4px;border-radius:50%;background:#222"></div>
<svg style="left:0;top:0" width="1946" height="965" viewBox="0 0 1946 965"><g transform="translate(1115.9,646.5)" fill="none" stroke="#5a5a5a" stroke-width="1.35" stroke-linejoin="miter"><path d="M0.7 0.7 V17.5"/><path d="M0.7 0.9 H8.3 V8.3 H0.7"/><path d="M8.3 2.6 H15.9 V10.2 H8.3"/></g><g transform="translate(1226.0,645.8)"><path d="M0.7 0.4 V17.7" stroke="#5a5a5a" stroke-width="1.35" fill="none"/><rect x="0.7" y="0.6" width="15.6" height="10.6" fill="none" stroke="#5a5a5a" stroke-width="1.2"/><rect x="0.70" y="0.60" width="2.60" height="2.65" fill="#5a5a5a"/><rect x="5.90" y="0.60" width="2.60" height="2.65" fill="#5a5a5a"/><rect x="11.10" y="0.60" width="2.60" height="2.65" fill="#5a5a5a"/><rect x="3.30" y="3.25" width="2.60" height="2.65" fill="#5a5a5a"/><rect x="8.50" y="3.25" width="2.60" height="2.65" fill="#5a5a5a"/><rect x="13.70" y="3.25" width="2.60" height="2.65" fill="#5a5a5a"/><rect x="0.70" y="5.90" width="2.60" height="2.65" fill="#5a5a5a"/><rect x="5.90" y="5.90" width="2.60" height="2.65" fill="#5a5a5a"/><rect x="11.10" y="5.90" width="2.60" height="2.65" fill="#5a5a5a"/><rect x="3.30" y="8.55" width="2.60" height="2.65" fill="#5a5a5a"/><rect x="8.50" y="8.55" width="2.60" height="2.65" fill="#5a5a5a"/><rect x="13.70" y="8.55" width="2.60" height="2.65" fill="#5a5a5a"/></g><g transform="translate(1319.9,647.1)" fill="none" stroke="#5a5a5a" stroke-width="1.4" stroke-linejoin="miter"><path d="M5 0.7 H17.7 L21.8 14.3 H0.9 Z"/><path d="M11.35 2.4 V5.2 M11.35 7.4 V10 M11.35 12 V14"/></g><g transform="translate(1448.3,645.5)" fill="none" stroke="#5a5a5a" stroke-width="1.35" stroke-linejoin="round"><path d="M6.9 17.9 C6.9 17.9 0.7 10.9 0.7 6.8 A6.2 6.2 0 0 1 13.1 6.8 C13.1 10.9 6.9 17.9 6.9 17.9 Z"/><circle cx="6.9" cy="6.6" r="0.9" fill="#5a5a5a" stroke="none"/></g><g transform="translate(1542.4,647.2)" fill="none" stroke="#5a5a5a" stroke-width="1.35" stroke-linejoin="round" stroke-linecap="round"><path d="M3.4 5.6 L4.8 1.4 Q5 0.7 5.8 0.7 H13.5 Q14.3 0.7 14.5 1.4 L15.9 5.6"/><path d="M0.6 4.6 H18.7"/><path d="M2.2 5.6 H17.1 Q17.9 5.6 17.9 6.6 V14 H14.6 V12.4 H4.7 V14 H1.4 V6.6 Q1.4 5.6 2.2 5.6 Z"/><path d="M6.6 10.9 V9.6 H12.7 V10.9"/><circle cx="4.3" cy="8.4" r="0.8" fill="#5a5a5a" stroke="none"/><circle cx="15" cy="8.4" r="0.8" fill="#5a5a5a" stroke="none"/></g><g transform="translate(1653.8,646.8)" fill="none" stroke="#5a5a5a" stroke-width="1.4" stroke-linecap="round" stroke-linejoin="round"><ellipse cx="7.5" cy="5.5" rx="4.6" ry="4.8"/><path d="M0.7 15.7 C1 12 2.6 10.2 4.6 9.4 C5.4 11.6 6.4 12.6 7.5 12.6 C8.6 12.6 9.6 11.6 10.4 9.4 C12.4 10.2 14 12 14.3 15.7"/></g><g transform="translate(1754.9,645.5)" fill="none" stroke="#5a5a5a" stroke-width="1.35" stroke-linecap="round" stroke-linejoin="round"><circle cx="9.5" cy="9.5" r="8.8"/><path d="M9.5 4.6 V14 M5.6 10.3 L9.5 14.2 L13.4 10.3"/></g></svg>
<div class="abs" style="left:1087px;top:691.5px;width:752.5px;height:95.6px;border:1px solid #dcdcdc;border-radius:2px;background:#fff"></div>
<div class="abs" style="left:1088px;top:692.5px;width:750.5px;height:43.5px;background:#efefef"></div>
<div class="abs" style="left:1098.2px;top:703.0px;width:21.3px;height:21.3px;border-radius:2px;background:#4a98e9"></div>
<svg style="left:1098.2px;top:703.0px" width="21.3" height="21.3" viewBox="0 0 21 21"><path d="M4.2 11.2 L8.6 15.4 L17 6" fill="none" stroke="#fff" stroke-width="2.5" stroke-linecap="butt" stroke-linejoin="miter"/></svg>
<div class="abs" style="left:1130.2px;top:701.2px;width:24.6px;height:24.6px;border-radius:50%;background:#426be0;border:1.2px solid #1a1a2a"></div>
<div class="abs" style="left:1638px;top:702.6px;width:114px;height:21.6px;border-radius:3px;background:#f5ecdc"></div>
<div class="abs" style="left:1792.6px;top:712.1px;width:2.4px;height:2.4px;border-radius:50%;background:#222"></div>
<div class="abs" style="left:1799.9px;top:712.1px;width:2.4px;height:2.4px;border-radius:50%;background:#222"></div>
<div class="abs" style="left:1807.2px;top:712.1px;width:2.4px;height:2.4px;border-radius:50%;background:#222"></div>
<svg style="left:0;top:0" width="1946" height="965" viewBox="0 0 1946 965"><g transform="translate(1115.9,752.9)" fill="none" stroke="#5a5a5a" stroke-width="1.35" stroke-linejoin="miter"><path d="M0.7 0.7 V17.5"/><path d="M0.7 0.9 H8.3 V8.3 H0.7"/><path d="M8.3 2.6 H15.9 V10.2 H8.3"/></g><g transform="translate(1227.0,752.2)"><path d="M0.7 0.4 V17.7" stroke="#5a5a5a" stroke-width="1.35" fill="none"/><rect x="0.7" y="0.6" width="15.6" height="10.6" fill="none" stroke="#5a5a5a" stroke-width="1.2"/><rect x="0.70" y="0.60" width="2.60" height="2.65" fill="#5a5a5a"/><rect x="5.90" y="0.60" width="2.60" height="2.65" fill="#5a5a5a"/><rect x="11.10" y="0.60" width="2.60" height="2.65" fill="#5a5a5a"/><rect x="3.30" y="3.25" width="2.60" height="2.65" fill="#5a5a5a"/><rect x="8.50" y="3.25" width="2.60" height="2.65" fill="#5a5a5a"/><rect x="13.70" y="3.25" width="2.60" height="2.65" fill="#5a5a5a"/><rect x="0.70" y="5.90" width="2.60" height="2.65" fill="#5a5a5a"/><rect x="5.90" y="5.90" width="2.60" height="2.65" fill="#5a5a5a"/><rect x="11.10" y="5.90" width="2.60" height="2.65" fill="#5a5a5a"/><rect x="3.30" y="8.55" width="2.60" height="2.65" fill="#5a5a5a"/><rect x="8.50" y="8.55" width="2.60" height="2.65" fill="#5a5a5a"/><rect x="13.70" y="8.55" width="2.60" height="2.65" fill="#5a5a5a"/></g><g transform="translate(1315.0,753.5)" fill="none" stroke="#5a5a5a" stroke-width="1.4" stroke-linejoin="miter"><path d="M5 0.7 H17.7 L21.8 14.3 H0.9 Z"/><path d="M11.35 2.4 V5.2 M11.35 7.4 V10 M11.35 12 V14"/></g><g transform="translate(1448.2,751.9)" fill="none" stroke="#5a5a5a" stroke-width="1.35" stroke-linejoin="round"><path d="M6.9 17.9 C6.9 17.9 0.7 10.9 0.7 6.8 A6.2 6.2 0 0 1 13.1 6.8 C13.1 10.9 6.9 17.9 6.9 17.9 Z"/><circle cx="6.9" cy="6.6" r="0.9" fill="#5a5a5a" stroke="none"/></g><g transform="translate(1544.8,753.6)" fill="none" stroke="#5a5a5a" stroke-width="1.35" stroke-linejoin="round" stroke-linecap="round"><path d="M3.4 5.6 L4.8 1.4 Q5 0.7 5.8 0.7 H13.5 Q14.3 0.7 14.5 1.4 L15.9 5.6"/><path d="M0.6 4.6 H18.7"/><path d="M2.2 5.6 H17.1 Q17.9 5.6 17.9 6.6 V14 H14.6 V12.4 H4.7 V14 H1.4 V6.6 Q1.4 5.6 2.2 5.6 Z"/><path d="M6.6 10.9 V9.6 H12.7 V10.9"/><circle cx="4.3" cy="8.4" r="0.8" fill="#5a5a5a" stroke="none"/><circle cx="15" cy="8.4" r="0.8" fill="#5a5a5a" stroke="none"/></g><g transform="translate(1661.0,753.2)" fill="none" stroke="#5a5a5a" stroke-width="1.4" stroke-linecap="round" stroke-linejoin="round"><ellipse cx="7.5" cy="5.5" rx="4.6" ry="4.8"/><path d="M0.7 15.7 C1 12 2.6 10.2 4.6 9.4 C5.4 11.6 6.4 12.6 7.5 12.6 C8.6 12.6 9.6 11.6 10.4 9.4 C12.4 10.2 14 12 14.3 15.7"/></g><g transform="translate(1749.8,751.9)" fill="none" stroke="#5a5a5a" stroke-width="1.35" stroke-linecap="round" stroke-linejoin="round"><circle cx="9.5" cy="9.5" r="8.8"/><path d="M9.5 4.6 V14 M5.6 10.3 L9.5 14.2 L13.4 10.3"/></g></svg>

</div></div>

<!-- ================= HEADER ================= -->
<div id="hdr" style="border-radius:20px 20px 0 0"></div>
<div class="abs" style="z-index:6;left:0;top:0;width:1946px;height:965px;pointer-events:none">
  <div class="abs" style="left:429px;top:103px;width:157px;height:39.5px;border:1px solid #cfcfcf;border-radius:4px;background:#fff"></div>
  <div class="abs" style="left:555px;top:120.5px;width:0;height:0;border-left:5.8px solid transparent;border-right:5.8px solid transparent;border-top:6px solid #555"></div>
  <div class="abs" style="left:834px;top:104px;width:117px;height:38px;border-radius:6px;background:#eff6fd"></div>
  <div class="abs" style="left:1753px;top:96.6px;width:26px;height:26px;border-radius:50%;background:#2e6bb4;z-index:2"></div>
  <div class="abs" style="left:1784px;top:99px;width:48px;height:48px;border-radius:50%;background:#4a98e9;box-shadow:0 3px 7px rgba(0,0,0,.28)"></div>
  <svg style="left:0;top:0;z-index:2" width="1946" height="965" viewBox="0 0 1946 965">
<defs><linearGradient id="lg1" x1="0" y1="0" x2="1" y2="1"><stop offset="0" stop-color="#3f8df0"/><stop offset="0.45" stop-color="#2f49dc"/><stop offset="1" stop-color="#5a3fe6"/></linearGradient></defs>
<path d="M147.85 132.75 L136.35 132.75 A11.5 11.5 0 1 1 147.85 121.25 Z" fill="none" stroke="url(#lg1)" stroke-width="4.6" stroke-linejoin="miter"/>
<path d="M134.35 132.75 L147.85 132.75 L147.85 128.25" fill="none" stroke="#4a8ff0" stroke-width="4.6" stroke-linejoin="miter" stroke-linecap="butt"/>
<path d="M134.35 132.75 A11.5 11.5 0 0 1 126.05 126.25" fill="none" stroke="#2424d2" stroke-width="4.6"/>
<path d="M147.85 118.25 L147.85 128.25" fill="none" stroke="#5a40e4" stroke-width="4.6"/>
<g fill="none" stroke="#222" stroke-width="1.5" stroke-linejoin="miter"><rect x="733.85" y="113.90" width="18.20" height="18.25"/><path d="M733.10 117.24 H752.80"/><path d="M737.43 112.30 V115.18" stroke-width="1.8"/><path d="M748.47 112.30 V115.18" stroke-width="1.8"/></g><rect x="740.24" y="120.53" width="1.67" height="1.67" fill="#222"/><rect x="743.89" y="120.53" width="1.67" height="1.67" fill="#222"/><rect x="747.53" y="120.53" width="1.67" height="1.67" fill="#222"/><rect x="736.60" y="124.23" width="1.67" height="1.67" fill="#222"/><rect x="740.24" y="124.23" width="1.67" height="1.67" fill="#222"/><rect x="743.89" y="124.23" width="1.67" height="1.67" fill="#222"/><rect x="747.53" y="124.23" width="1.67" height="1.67" fill="#222"/><rect x="736.60" y="127.94" width="1.67" height="1.67" fill="#222"/><rect x="740.24" y="127.94" width="1.67" height="1.67" fill="#222"/><rect x="743.89" y="127.94" width="1.67" height="1.67" fill="#222"/>
<g fill="none" stroke="#222" stroke-width="1.4" stroke-linejoin="miter"><rect x="633.70" y="187.30" width="17.00" height="17.30"/><path d="M633.00 190.40 H651.40"/><path d="M637.05 185.70 V188.44" stroke-width="1.7"/><path d="M647.35 185.70 V188.44" stroke-width="1.7"/></g><rect x="639.67" y="193.54" width="1.56" height="1.56" fill="#222"/><rect x="643.07" y="193.54" width="1.56" height="1.56" fill="#222"/><rect x="646.48" y="193.54" width="1.56" height="1.56" fill="#222"/><rect x="636.27" y="197.07" width="1.56" height="1.56" fill="#222"/><rect x="639.67" y="197.07" width="1.56" height="1.56" fill="#222"/><rect x="643.07" y="197.07" width="1.56" height="1.56" fill="#222"/><rect x="646.48" y="197.07" width="1.56" height="1.56" fill="#222"/><rect x="636.27" y="200.60" width="1.56" height="1.56" fill="#222"/><rect x="639.67" y="200.60" width="1.56" height="1.56" fill="#222"/><rect x="643.07" y="200.60" width="1.56" height="1.56" fill="#222"/>
<path d="M848.6 130.9 H865.6 C867 128.8 867.2 126.9 867.2 125 A10.1 10.1 0 0 0 847 125 C847 126.9 847.2 128.8 848.6 130.9 Z" fill="none" stroke="#5b9ad6" stroke-width="1.5" stroke-linejoin="round"/>
<circle cx="849.91" cy="124.23" r="0.55" fill="#5b9ad6"/>
<circle cx="851.51" cy="120.81" r="0.55" fill="#5b9ad6"/>
<circle cx="854.60" cy="118.64" r="0.55" fill="#5b9ad6"/>
<circle cx="858.37" cy="118.31" r="0.55" fill="#5b9ad6"/>
<circle cx="861.79" cy="119.91" r="0.55" fill="#5b9ad6"/>
<circle cx="863.96" cy="123.00" r="0.55" fill="#5b9ad6"/>
<circle cx="864.29" cy="126.77" r="0.55" fill="#5b9ad6"/>
<path d="M857.1 125.2 L863.3 121.7" stroke="#5b9ad6" stroke-width="1.7" stroke-linecap="round"/><circle cx="857.1" cy="125.2" r="1.5" fill="#5b9ad6"/>
<g fill="none" stroke="#222" stroke-width="1.6" stroke-linejoin="miter"><path d="M972.9 116.3 H989.5 L992.3 119.1 L989.5 121.9 H972.9 Z"/><path d="M981.8 113.2 V116 M981.8 124.4 V133"/></g>
<g fill="none" stroke="#222" stroke-width="1.6" stroke-linejoin="miter"><path d="M1070.2 119.8 C1073 121.2 1075.5 118 1078.8 116.8 C1081.5 116 1083 118.6 1085 117.8 C1086.8 117 1088 115.4 1089.2 114 V132.4 H1070.2 Z"/><path d="M1070.2 126.2 C1073 127.4 1075.5 124.4 1078.8 123.2 C1081.5 122.4 1083 125 1085 124.2 C1086.8 123.6 1088 122.4 1089.2 121.4"/></g>
<g fill="none" stroke="#222" stroke-width="1.35" stroke-linecap="round"><circle cx="1317.9" cy="117.2" r="2.1"/><circle cx="1325.8" cy="117.2" r="2.1"/><circle cx="1313.9" cy="123.1" r="3.1"/><path d="M1311.5 125.69999999999999 L1309.7 128.5 M1316.3000000000002 125.69999999999999 L1318.1000000000001 128.5"/><circle cx="1322.1" cy="126.0" r="3.1"/><path d="M1319.6999999999998 128.6 L1317.8999999999999 131.4 M1324.5 128.6 L1326.3 131.4"/><circle cx="1330.2" cy="123.1" r="3.1"/><path d="M1327.8 125.69999999999999 L1326.0 128.5 M1332.6000000000001 125.69999999999999 L1334.4 128.5"/></g>
<g fill="none" stroke="#222" stroke-width="1.5" stroke-linecap="round"><circle cx="1424.9" cy="119.4" r="5.6"/><path d="M1422.4 125.4 C1419.4 126.6 1417.4 129.2 1416.6 132.6"/></g>
<g stroke="#222" stroke-width="1.5" stroke-linecap="butt" fill="none"><path d="M1436.14 132.40 L1438.54 133.40"/><path d="M1434.30 134.24 L1435.30 136.64"/><path d="M1431.70 134.24 L1430.70 136.64"/><path d="M1429.86 132.40 L1427.46 133.40"/><path d="M1429.86 129.80 L1427.46 128.80"/><path d="M1431.70 127.96 L1430.70 125.56"/><path d="M1434.30 127.96 L1435.30 125.56"/><path d="M1436.14 129.80 L1438.54 128.80"/><circle cx="1433" cy="131.1" r="3.5" stroke-width="1.4"/><circle cx="1433" cy="131.1" r="0.7" fill="#222" stroke="none"/></g>
<path d="M1570.04 121.23 L1570.04 124.97 L1567.40 124.91 L1566.31 127.55 L1568.22 129.37 L1565.57 132.02 L1563.75 130.11 L1561.11 131.20 L1561.17 133.84 L1557.43 133.84 L1557.49 131.20 L1554.85 130.11 L1553.03 132.02 L1550.38 129.37 L1552.29 127.55 L1551.20 124.91 L1548.56 124.97 L1548.56 121.23 L1551.20 121.29 L1552.29 118.65 L1550.38 116.83 L1553.03 114.18 L1554.85 116.09 L1557.49 115.00 L1557.43 112.36 L1561.17 112.36 L1561.11 115.00 L1563.75 116.09 L1565.57 114.18 L1568.22 116.83 L1566.31 118.65 L1567.40 121.29 Z" fill="none" stroke="#222" stroke-width="1.5" stroke-linejoin="round"/><circle cx="1559.3" cy="123.1" r="3.6" fill="none" stroke="#222" stroke-width="1.5"/>
<g fill="none" stroke="#222" stroke-width="1.6" stroke-linecap="round"><circle cx="1701.9" cy="121.6" r="8.2"/><path d="M1696.3 127.8 L1689 134.6"/></g>
<g fill="none" stroke="#222" stroke-width="1.6" stroke-linecap="round" stroke-linejoin="round"><path d="M1743.8 131.4 H1760.2 M1746.3 131.2 V121.6 C1746.3 117.6 1748.6 114.6 1751.9 114.2 C1755.3 114.6 1757.6 117.6 1757.6 121.6 V131.2"/><path d="M1750.4 132.4 A1.7 1.7 0 0 0 1753.6 132.4" /><path d="M1751.9 113.3 V114"/></g>
<path d="M693.8 191.6 L688.6 197.1 L693.8 202.6" fill="none" stroke="#aaa" stroke-width="1.3" stroke-linecap="round" stroke-linejoin="round"/>
<path d="M861.8 191.8 L867 197.2 L861.8 202.6" fill="none" stroke="#333" stroke-width="1.4" stroke-linecap="round" stroke-linejoin="round"/>
<g fill="none" stroke="#fff" stroke-width="1.5" stroke-linejoin="round" stroke-linecap="round"><path d="M1414.8 188.6 C1409.6 188.4 1405.6 190.6 1402.6 195 L1400.6 198.4 L1404.6 202.4 L1408 200.4 C1412.4 197.4 1414.8 193.6 1414.8 188.6 Z"/><path d="M1402.2 195.8 L1397.8 196.4 L1395.8 199.6 L1400 199.2"/><path d="M1407.4 200.8 L1406.8 205.2 L1403.6 207.2 L1404 203"/><path d="M1400.4 202.6 L1396.4 206.8 M1398.6 201.2 L1396 203.6 M1402 204.4 L1399.6 207"/><circle cx="1409" cy="194.2" r="1.7"/></g>
<path d="M1651.4 188.3 V204.9 M1643.1 196.6 H1659.8" stroke="#fff" stroke-width="1.6" fill="none"/>
<g fill="none" stroke="#fff" stroke-width="1.5" stroke-linecap="round" stroke-linejoin="round"><path d="M1695.6 202.2 H1693.6 C1691 202.2 1689.4 200.4 1689.4 198.4 C1689.4 196.4 1690.8 194.9 1692.7 194.7 C1692.8 192 1695 190.4 1697.4 190.6 C1698.6 190.6 1699.6 191 1700.4 191.7 C1701.3 191.2 1702.2 191 1703.2 191.2 C1705.2 191.6 1706.4 193.2 1706.3 195 C1707.8 195.4 1708.8 196.8 1708.8 198.4 C1708.8 200.6 1707.2 202.2 1704.8 202.2 H1702.4"/><path d="M1699 196.6 V205.6 M1696.6 203.2 L1699 205.8 L1701.4 203.2"/></g>
<g fill="none" stroke="#fff" stroke-width="1.6" stroke-linejoin="miter"><rect x="1738.8" y="196.4" width="13.9" height="8.8"/><path d="M1741.9 196.2 V192.4 A3.9 3.9 0 0 1 1749.7 192.4 V196.2"/></g>
<g fill="none" stroke="#fff" stroke-width="1.6" stroke-linejoin="miter"><rect x="1780.8" y="191.4" width="18.4" height="11.8"/><path d="M1781 191.8 L1790 198.8 L1799 191.8"/></g>
<g fill="none" stroke="#222" stroke-width="1.7" stroke-linejoin="miter"><rect x="117.9" y="250.6" width="18.6" height="17.2"/><path d="M117.1 254.6 H137.3"/><path d="M121.6 248.5 V251 M132.8 248.5 V251" stroke-width="1.9"/><path d="M122.8 260.4 L125.9 263.3 L131.6 257.6" stroke-width="1.8"/></g>
<g fill="none" stroke="#222" stroke-width="1.7" stroke-linejoin="miter"><path d="M119.6 300.5 H134.9 L139.9 315.5 H114.6 Z"/><path d="M127.25 302.4 V305 M127.25 307.2 V310.2 M127.25 312.4 V314.8" stroke-width="1.8"/></g>
<g fill="none" stroke="#5b9ad6" stroke-width="1.6" stroke-linejoin="round" stroke-linecap="round"><path d="M126 352.2 L123.4 351.4 L117.4 353.4 V367.2 L123.4 365.2 L130.6 367.2 L137.4 365.2 V358.6"/><path d="M123.4 351.6 V365"/><path d="M131.4 363.6 C131.4 363.6 126.2 357.4 126.2 353.4 A5.2 5.2 0 0 1 136.6 353.4 C136.6 357.4 131.4 363.6 131.4 363.6 Z"/><circle cx="131.4" cy="353.3" r="1.5"/><path d="M130.6 363.4 V367"/></g>
<g fill="none" stroke="#222" stroke-width="1.7" stroke-linejoin="miter"><path d="M125.2 402.0 H138.3"/><path d="M116.9 401.8 L118.6 403.4 L121.7 400.1" stroke-width="1.6"/><path d="M125.2 409.2 H138.3"/><path d="M116.9 409.0 L118.6 410.59999999999997 L121.7 407.3" stroke-width="1.6"/><path d="M125.2 416.4 H138.3"/><path d="M116.9 416.2 L118.6 417.79999999999995 L121.7 414.5" stroke-width="1.6"/></g>
</svg>
  <div class="abs" style="left:0;top:0;z-index:3">
<span class="t" style="left:158.6px;top:110.3px;font-size:30px;line-height:30px;font-weight:700;color:#1d1d1f;letter-spacing:0.00px;transform:scaleX(0.9449);transform-origin:0 0;">Ants</span>
<span class="t" style="left:224.6px;top:110.3px;font-size:30px;line-height:30px;font-weight:400;color:#2a2a2c;letter-spacing:0.00px;transform:scaleX(0.9730);transform-origin:0 0;">Route</span>
<span class="t" style="left:354.4px;top:115.3px;font-size:15px;line-height:15px;font-weight:400;color:#262626;letter-spacing:0.98px;-webkit-text-stroke:0.22px currentColor;">Entrepôt</span>
<span class="t" style="left:448.0px;top:115.3px;font-size:15px;line-height:15px;font-weight:400;color:#262626;letter-spacing:0.62px;-webkit-text-stroke:0.22px currentColor;">Nancy</span>
<span class="t" style="left:757.8px;top:115.4px;font-size:15px;line-height:15px;font-weight:400;color:#262626;letter-spacing:0.62px;-webkit-text-stroke:0.22px currentColor;">Planifier</span>
<span class="t" style="left:871.3px;top:115.4px;font-size:15px;line-height:15px;font-weight:400;color:#5b9ad6;letter-spacing:0.61px;-webkit-text-stroke:0.22px currentColor;">Organiser</span>
<span class="t" style="left:996.0px;top:115.4px;font-size:15px;line-height:15px;font-weight:400;color:#262626;letter-spacing:0.29px;-webkit-text-stroke:0.22px currentColor;">Suivre</span>
<span class="t" style="left:1094.0px;top:115.4px;font-size:15px;line-height:15px;font-weight:400;color:#262626;letter-spacing:0.38px;-webkit-text-stroke:0.22px currentColor;">Analyser</span>
<span class="t" style="left:1337.0px;top:115.4px;font-size:15px;line-height:15px;font-weight:400;color:#262626;letter-spacing:0.44px;-webkit-text-stroke:0.22px currentColor;">Clients</span>
<span class="t" style="left:1440.0px;top:115.4px;font-size:15px;line-height:15px;font-weight:400;color:#262626;letter-spacing:0.09px;-webkit-text-stroke:0.22px currentColor;">Ressources</span>
<span class="t" style="left:1574.3px;top:115.4px;font-size:15px;line-height:15px;font-weight:400;color:#262626;letter-spacing:0.66px;-webkit-text-stroke:0.22px currentColor;">Paramètres</span>
<span class="t" style="left:1757.6px;top:103.4px;font-size:13px;line-height:13px;font-weight:700;color:#fff;letter-spacing:0.00px;transform:scaleX(1.1749);transform-origin:0 0;">46</span>
<span class="t" style="left:1796.2px;top:116.1px;font-size:14px;line-height:14px;font-weight:700;color:#fff;letter-spacing:0.00px;transform:scaleX(1.0835);transform-origin:0 0;">MH</span>
<span class="t" style="left:406.2px;top:187.3px;font-size:21.5px;line-height:21.5px;font-weight:400;color:#cd7f52;letter-spacing:0.37px;">Carte des tournées</span>
<span class="t" style="left:740.0px;top:189.0px;font-size:15px;line-height:15px;font-weight:400;color:#262626;letter-spacing:0.14px;-webkit-text-stroke:0.22px currentColor;">08/10/2025</span>
<span class="t" style="left:1430.4px;top:189.3px;font-size:15px;line-height:15px;font-weight:700;color:#fff;letter-spacing:0.00px;transform:scaleX(0.9950);transform-origin:0 0;">Ré-optimiser les tournées</span>
<span class="t" style="left:148.0px;top:249.9px;font-size:15px;line-height:15px;font-weight:400;color:#262626;letter-spacing:0.84px;-webkit-text-stroke:0.22px currentColor;">Planning</span>
<span class="t" style="left:148.0px;top:300.3px;font-size:15px;line-height:15px;font-weight:400;color:#262626;letter-spacing:0.42px;-webkit-text-stroke:0.22px currentColor;">Liste des tournées</span>
<span class="t" style="left:148.0px;top:350.3px;font-size:15px;line-height:15px;font-weight:400;color:#5b9ad6;letter-spacing:0.44px;-webkit-text-stroke:0.22px currentColor;">Carte des tournées</span>
<span class="t" style="left:148.0px;top:400.5px;font-size:15px;line-height:15px;font-weight:400;color:#262626;letter-spacing:0.27px;-webkit-text-stroke:0.22px currentColor;">Liste des livraisons</span>
<span class="t" style="left:1099.7px;top:253.5px;font-size:15px;line-height:15px;font-weight:400;color:#6a6a6a;letter-spacing:0.57px;">Filtrer l&#x27;affichage</span>
<span class="t" style="left:1156.4px;top:319.1px;font-size:14.5px;line-height:14.5px;font-weight:700;color:#fff;letter-spacing:0.00px;transform:scaleX(0.9899);transform-origin:0 0;">Livreurs hors secteur</span>
<span class="t" style="left:1164.0px;top:387.0px;font-size:15px;line-height:15px;font-weight:400;color:#1f1f1f;letter-spacing:0.33px;-webkit-text-stroke:0.22px currentColor;">Alexandre Sanchez | v4</span>
<span class="t" style="left:1644.3px;top:388.3px;font-size:12px;line-height:12px;font-weight:700;color:#f2b94a;letter-spacing:0.21px;">NON DEMARREE</span>
<span class="t" style="left:1136.7px;top:436.2px;font-size:12.5px;line-height:12.5px;font-weight:400;color:#707070;letter-spacing:0.50px;">08:00</span>
<span class="t" style="left:1247.7px;top:436.2px;font-size:12.5px;line-height:12.5px;font-weight:400;color:#707070;letter-spacing:0.00px;transform:scaleX(0.8280);transform-origin:0 0;">14:18</span>
<span class="t" style="left:1346.7px;top:436.2px;font-size:12.5px;line-height:12.5px;font-weight:400;color:#707070;letter-spacing:0.32px;">5,09 km</span>
<span class="t" style="left:1472.5px;top:436.2px;font-size:12.5px;line-height:12.5px;font-weight:400;color:#707070;letter-spacing:0.00px;transform:scaleX(0.7694);transform-origin:0 0;">17</span>
<span class="t" style="left:1568.5px;top:436.2px;font-size:12.5px;line-height:12.5px;font-weight:400;color:#707070;letter-spacing:0.00px;transform:scaleX(0.9957);transform-origin:0 0;">13min</span>
<span class="t" style="left:1677.8px;top:436.2px;font-size:12.5px;line-height:12.5px;font-weight:400;color:#707070;letter-spacing:0.53px;">6h05</span>
<span class="t" style="left:1781.6px;top:436.2px;font-size:12.5px;line-height:12.5px;font-weight:400;color:#707070;letter-spacing:0.37px;">4,58 €</span>
<span class="t" style="left:1164.0px;top:493.4px;font-size:15px;line-height:15px;font-weight:400;color:#1f1f1f;letter-spacing:0.34px;-webkit-text-stroke:0.22px currentColor;">Julia Virmond | v1</span>
<span class="t" style="left:1644.3px;top:494.7px;font-size:12px;line-height:12px;font-weight:700;color:#f2b94a;letter-spacing:0.21px;">NON DEMARREE</span>
<span class="t" style="left:1136.7px;top:542.6px;font-size:12.5px;line-height:12.5px;font-weight:400;color:#707070;letter-spacing:0.50px;">08:00</span>
<span class="t" style="left:1247.0px;top:542.6px;font-size:12.5px;line-height:12.5px;font-weight:400;color:#707070;letter-spacing:0.00px;transform:scaleX(0.8631);transform-origin:0 0;">23:21</span>
<span class="t" style="left:1342.8px;top:542.6px;font-size:12.5px;line-height:12.5px;font-weight:400;color:#707070;letter-spacing:0.40px;">36,86 km</span>
<span class="t" style="left:1470.4px;top:542.6px;font-size:12.5px;line-height:12.5px;font-weight:400;color:#707070;letter-spacing:0.00px;transform:scaleX(0.9924);transform-origin:0 0;">38</span>
<span class="t" style="left:1571.6px;top:542.6px;font-size:12.5px;line-height:12.5px;font-weight:400;color:#707070;letter-spacing:0.00px;transform:scaleX(0.9744);transform-origin:0 0;">1h06</span>
<span class="t" style="left:1676.0px;top:542.6px;font-size:12.5px;line-height:12.5px;font-weight:400;color:#707070;letter-spacing:0.00px;transform:scaleX(0.9262);transform-origin:0 0;">13h55</span>
<span class="t" style="left:1770.5px;top:542.6px;font-size:12.5px;line-height:12.5px;font-weight:400;color:#707070;letter-spacing:0.00px;transform:scaleX(0.9747);transform-origin:0 0;">1 009,26 €</span>
<span class="t" style="left:1164.0px;top:599.8px;font-size:15px;line-height:15px;font-weight:400;color:#1f1f1f;letter-spacing:0.41px;-webkit-text-stroke:0.22px currentColor;">Pauline Henry | v5</span>
<span class="t" style="left:1644.3px;top:601.1px;font-size:12px;line-height:12px;font-weight:700;color:#f2b94a;letter-spacing:0.21px;">NON DEMARREE</span>
<span class="t" style="left:1136.7px;top:649.0px;font-size:12.5px;line-height:12.5px;font-weight:400;color:#707070;letter-spacing:0.50px;">08:00</span>
<span class="t" style="left:1246.7px;top:649.0px;font-size:12.5px;line-height:12.5px;font-weight:400;color:#707070;letter-spacing:0.00px;transform:scaleX(0.8983);transform-origin:0 0;">13:06</span>
<span class="t" style="left:1348.2px;top:649.0px;font-size:12.5px;line-height:12.5px;font-weight:400;color:#707070;letter-spacing:0.00px;transform:scaleX(0.9850);transform-origin:0 0;">5,14 km</span>
<span class="t" style="left:1472.9px;top:649.0px;font-size:12.5px;line-height:12.5px;font-weight:400;color:#707070;letter-spacing:0.00px;transform:scaleX(0.7407);transform-origin:0 0;">13</span>
<span class="t" style="left:1569.5px;top:649.0px;font-size:12.5px;line-height:12.5px;font-weight:400;color:#707070;letter-spacing:0.00px;transform:scaleX(0.9419);transform-origin:0 0;">11min</span>
<span class="t" style="left:1678.4px;top:649.0px;font-size:12.5px;line-height:12.5px;font-weight:400;color:#707070;letter-spacing:0.20px;">4h55</span>
<span class="t" style="left:1781.6px;top:649.0px;font-size:12.5px;line-height:12.5px;font-weight:400;color:#707070;letter-spacing:0.29px;">4,63 €</span>
<span class="t" style="left:1164.0px;top:706.2px;font-size:15px;line-height:15px;font-weight:400;color:#1f1f1f;letter-spacing:0.51px;-webkit-text-stroke:0.22px currentColor;">Pierre Dupont | v2</span>
<span class="t" style="left:1644.3px;top:707.5px;font-size:12px;line-height:12px;font-weight:700;color:#f2b94a;letter-spacing:0.21px;">NON DEMARREE</span>
<span class="t" style="left:1136.7px;top:755.4px;font-size:12.5px;line-height:12.5px;font-weight:400;color:#707070;letter-spacing:0.50px;">08:00</span>
<span class="t" style="left:1247.1px;top:755.4px;font-size:12.5px;line-height:12.5px;font-weight:400;color:#707070;letter-spacing:0.00px;transform:scaleX(0.8599);transform-origin:0 0;">16:55</span>
<span class="t" style="left:1343.7px;top:755.4px;font-size:12.5px;line-height:12.5px;font-weight:400;color:#707070;letter-spacing:0.00px;transform:scaleX(0.9131);transform-origin:0 0;">121,75 km</span>
<span class="t" style="left:1472.5px;top:755.4px;font-size:12.5px;line-height:12.5px;font-weight:400;color:#707070;letter-spacing:0.00px;transform:scaleX(0.7694);transform-origin:0 0;">18</span>
<span class="t" style="left:1571.1px;top:755.4px;font-size:12.5px;line-height:12.5px;font-weight:400;color:#707070;letter-spacing:0.00px;transform:scaleX(0.9996);transform-origin:0 0;">2h55</span>
<span class="t" style="left:1685.2px;top:755.4px;font-size:12.5px;line-height:12.5px;font-weight:400;color:#707070;letter-spacing:0.00px;transform:scaleX(1.0211);transform-origin:0 0;">6h</span>
<span class="t" style="left:1776.1px;top:755.4px;font-size:12.5px;line-height:12.5px;font-weight:400;color:#707070;letter-spacing:0.00px;transform:scaleX(0.9615);transform-origin:0 0;">292,21 €</span>
  </div>
</div>
<!-- collapse circle straddling sidebar border -->
<div class="abs" style="z-index:6;left:351.5px;top:180.5px;width:33.5px;height:33.5px;border-radius:50%;background:#fff;box-shadow:0 2px 6px rgba(0,0,0,.3)"></div>
<svg style="z-index:7;left:361px;top:188px" width="14" height="18" viewBox="0 0 14 18"><path d="M9.5 2.5 L3.5 9 L9.5 15.5" fill="none" stroke="#666" stroke-width="1.6" stroke-linecap="round" stroke-linejoin="round"/></svg>
</body>
</html>
